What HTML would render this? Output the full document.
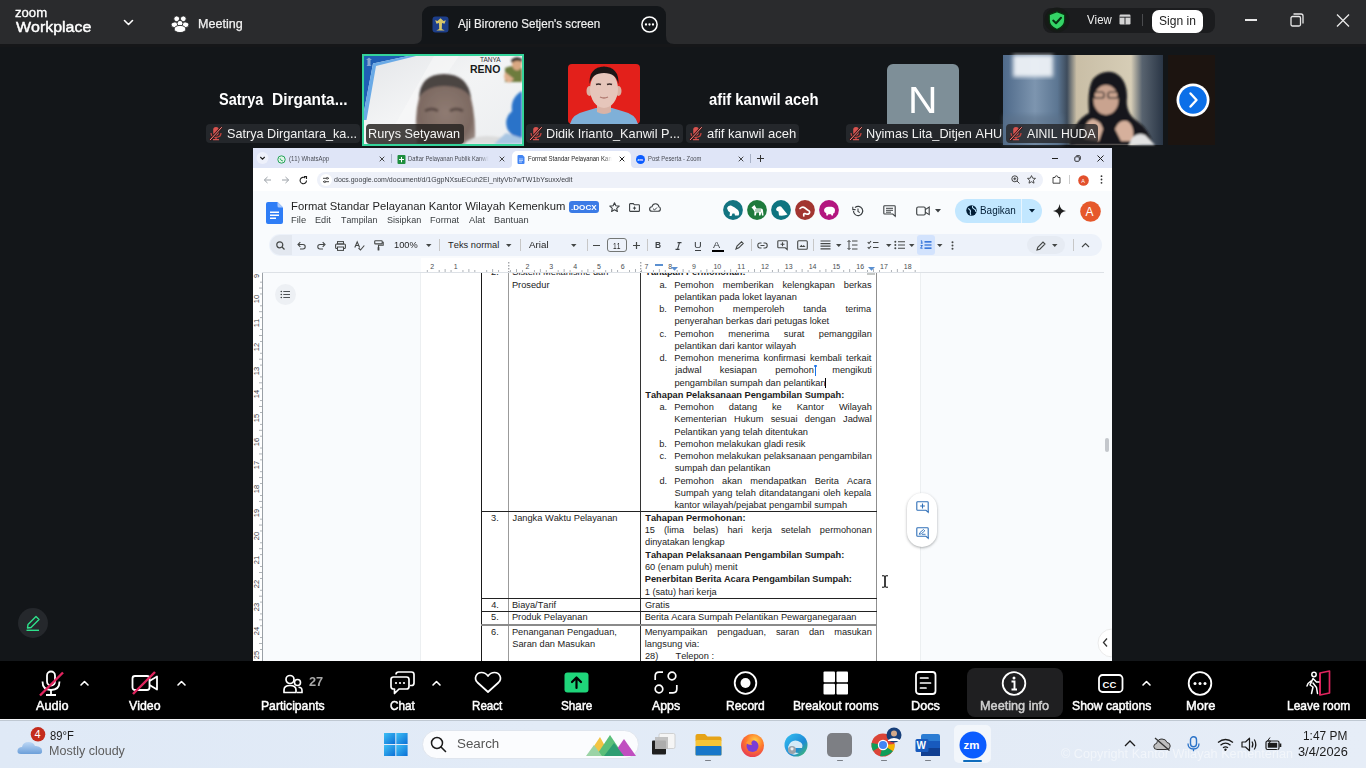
<!DOCTYPE html><html><head><meta charset="utf-8"><style>
*{margin:0;padding:0;box-sizing:border-box}
html,body{width:1366px;height:768px;overflow:hidden;background:#131619;font-family:"Liberation Sans",sans-serif}
.a{position:absolute}
.t{position:absolute;white-space:nowrap;transform-origin:0 0;font-kerning:none}
svg.a{overflow:visible}
</style></head><body><div class="a" style="left:0px;top:0px;width:1366px;height:44px;background:#2a2b2d"></div>
<div class="a" style="left:0px;top:44px;width:1366px;height:3px;background:#161719"></div>
<div class="t" style="left:15.47px;top:5.57px;font-size:13.5px;line-height:13.5px;color:#fff;transform:scaleX(0.9723);-webkit-text-stroke:0.35px #fff">zoom</div>
<div class="t" style="left:16.43px;top:19.28px;font-size:15.5px;line-height:15.5px;color:#fff;transform:scaleX(1.0282);-webkit-text-stroke:0.45px #fff">Workplace</div>
<svg class="a" style="left:123px;top:19px;" width="11" height="7" viewBox="0 0 11 7"><path d="M1.5 1.5L5.5 5.5L9.5 1.5" stroke="#fff" stroke-width="1.6" fill="none" stroke-linecap="round" stroke-linejoin="round"/></svg>
<svg class="a" style="left:171px;top:15px;" width="18" height="18" viewBox="0 0 18 18"><g fill="#fff" stroke="#2a2b2d" stroke-width="0.9"><circle cx="5.7" cy="3.8" r="2.9"/><circle cx="12.3" cy="3.8" r="2.9"/><ellipse cx="3.9" cy="9.8" rx="3.8" ry="2.9"/><ellipse cx="14.1" cy="9.8" rx="3.8" ry="2.9"/><circle cx="9" cy="8.3" r="2.9"/><ellipse cx="9" cy="14" rx="5.9" ry="3.6"/></g></svg>
<div class="t" style="left:197.57px;top:17.92px;font-size:12.5px;line-height:12.5px;color:#f2f2f2;transform:scaleX(1.0038);-webkit-text-stroke:0.25px #f2f2f2">Meeting</div>
<div class="a" style="left:422px;top:6px;width:244px;height:38px;background:#131619;border-radius:9px 9px 0 0"></div>
<svg class="a" style="left:414px;top:36px;" width="8" height="8" viewBox="0 0 8 8"><path d="M0 8 Q8 8 8 0 L8 8Z" fill="#131619"/></svg>
<svg class="a" style="left:666px;top:36px;" width="8" height="8" viewBox="0 0 8 8"><path d="M8 8 Q0 8 0 0 L0 8Z" fill="#131619"/></svg>
<svg class="a" style="left:432px;top:16px;" width="17" height="17" viewBox="0 0 17 17"><rect x="0.5" y="0.5" width="16" height="16" rx="3" fill="#1d3e8a"/><path d="M8.5 2.2 L11.5 5 L13.8 4.2 L12.5 7.8 L10 7 L9.8 13 L12.8 14.6 L4.2 14.6 L7.2 13 L7 7 L4.5 7.8 L3.2 4.2 L5.5 5Z" fill="#d8c66a"/></svg>
<div class="t" style="left:458.18px;top:16.70px;font-size:13px;line-height:13px;color:#f0f0f0;transform:scaleX(0.8926);-webkit-text-stroke:0.2px #f0f0f0">Aji Biroreno Setjen's screen</div>
<svg class="a" style="left:641px;top:15.5px;" width="17" height="17" viewBox="0 0 17 17"><circle cx="8.5" cy="8.5" r="7.6" stroke="#fff" stroke-width="1.5" fill="none"/><circle cx="5" cy="8.5" r="1.15" fill="#fff"/><circle cx="8.5" cy="8.5" r="1.15" fill="#fff"/><circle cx="12" cy="8.5" r="1.15" fill="#fff"/></svg>
<div class="a" style="left:1043px;top:8px;width:172px;height:25px;background:#1b1c1e;border-radius:8px"></div>
<svg class="a" style="left:1044px;top:7px;" width="26" height="26" viewBox="0 0 26 26"><circle cx="13" cy="13" r="12.5" fill="#161a17"/><path d="M13 4.6 L20.8 7.6 L20.8 13 Q20.8 19.5 13 22.6 Q5.2 19.5 5.2 13 L5.2 7.6Z" fill="#34d466" stroke="#06330f" stroke-width="1.3"/><path d="M9.2 13.6 L12 16.2 L17 10.8" stroke="#073012" stroke-width="2" fill="none" stroke-linecap="round" stroke-linejoin="round"/></svg>
<div class="t" style="left:1086.95px;top:13.00px;font-size:13px;line-height:13px;color:#f0f0f0;transform:scaleX(0.8774);">View</div>
<svg class="a" style="left:1119px;top:14px;" width="12" height="11" viewBox="0 0 12 11"><rect x="0.5" y="0.5" width="11" height="10" rx="1.2" fill="#d4d4d4"/><path d="M0.5 3.2 H11.5 M6 3.2 V10.5" stroke="#1b1c1e" stroke-width="0.9"/></svg>
<div class="a" style="left:1142px;top:14px;width:1px;height:12px;background:#4a4b4e"></div>
<div class="a" style="left:1152px;top:10px;width:51px;height:23px;background:#fff;border-radius:7px"></div>
<div class="t" style="left:1158.75px;top:13.60px;font-size:13px;line-height:13px;color:#222;transform:scaleX(0.9265);">Sign in</div>
<div class="a" style="left:1245px;top:19px;width:12px;height:2px;background:#e8e8e8"></div>
<svg class="a" style="left:1290px;top:13px;" width="14" height="14" viewBox="0 0 14 14"><rect x="1" y="3.5" width="9.5" height="9.5" rx="1.5" stroke="#e8e8e8" stroke-width="1.3" fill="none"/><path d="M3.5 1 H11 Q13 1 13 3 V10.5" stroke="#e8e8e8" stroke-width="1.3" fill="none"/></svg>
<svg class="a" style="left:1336px;top:14px;" width="14" height="13" viewBox="0 0 14 13"><path d="M1 0.5 L13 12.5 M13 0.5 L1 12.5" stroke="#e8e8e8" stroke-width="1.3"/></svg>
<div class="a" style="left:0px;top:47px;width:1366px;height:101px;background:#131619"></div>
<div class="t" style="left:218.58px;top:92.46px;font-size:16px;line-height:16px;color:#fff;font-weight:bold;transform:scaleX(0.9060);">Satrya</div>
<div class="t" style="left:271.57px;top:92.46px;font-size:16px;line-height:16px;color:#fff;font-weight:bold;transform:scaleX(0.9650);">Dirganta...</div>
<div class="a" style="left:206px;top:124px;width:154px;height:19px;background:#24272b;border-radius:4px"></div>
<svg class="a" style="left:207.5px;top:126px;" width="15" height="15" viewBox="0 0 15 15"><rect x="5.2" y="1" width="5.6" height="8.5" rx="2.8" fill="#d9534f"/><path d="M3 7 Q3 11.3 8 11.3 Q13 11.3 13 7" stroke="#c9443f" stroke-width="1.2" fill="none"/><path d="M8 11.3 V13.3 M5 13.6 H11" stroke="#d9534f" stroke-width="1.2"/><path d="M2 14 L13.8 1.2" stroke="#3a1516" stroke-width="2.6"/><path d="M2 14 L13.8 1.2" stroke="#f08a86" stroke-width="1"/></svg>
<div class="t" style="left:227.13px;top:127.00px;font-size:13px;line-height:13px;color:#f2f2f2;transform:scaleX(0.9720);">Satrya Dirgantara_ka...</div>
<svg class="a" style="left:364px;top:56px;" width="158" height="88" viewBox="0 0 158 88"><defs><linearGradient id="rg" x1="0" y1="0" x2="1" y2="1"><stop offset="0" stop-color="#e4e6e9"/><stop offset="0.45" stop-color="#f3f4f5"/><stop offset="1" stop-color="#eceef0"/></linearGradient><radialGradient id="face" cx="0.5" cy="0.55" r="0.6"><stop offset="0" stop-color="#8f7b72"/><stop offset="0.75" stop-color="#7d6a62"/><stop offset="1" stop-color="#9a8a84"/></radialGradient><filter id="b1"><feGaussianBlur stdDeviation="1.2"/></filter></defs><rect width="158" height="88" fill="url(#rg)"/><path d="M20 88 L70 0 H95 L35 88Z" fill="#fafafa" opacity="0.5"/><path d="M0 0 H44 L9 7.5 L0 55Z" fill="#1f5fb5"/><path d="M44 0 H52 L12 10 L2.5 64 H0 V55 L9 7.5Z" fill="#6aaae6"/><path d="M5 1.5 L8 4 L6.5 4 V9 L7.5 10 H2.5 L3.5 9 V4 L2 4Z" fill="#9fb9d6" opacity="0.8"/><g filter="url(#b1)"><path d="M53 88 Q50 60 55 42 Q58 20 80 19 Q104 20 107 42 Q112 62 111 88Z" fill="url(#face)"/><path d="M55 42 Q56 18 80 18 Q104 18 107 42 Q100 30 80 30 Q62 30 55 42Z" fill="#4c4442"/><path d="M61 55 Q68 51 74 55 M86 55 Q92 51 99 55" stroke="#4a3c37" stroke-width="3" fill="none" opacity="0.7"/><path d="M100 88 Q112 76 140 82 L150 88Z" fill="#dcdcdc"/></g><text x="106" y="16.5" font-family="Liberation Sans" font-weight="bold" font-size="10.5" fill="#1a1a1a">RENO</text><text x="116" y="5.5" font-family="Liberation Sans" font-size="6.5" fill="#333">TANYA</text><g filter="url(#b1)"><path d="M141 12 Q150 8 158 12 V26 H141Z" fill="#6d7b3c"/><ellipse cx="153" cy="8" rx="5" ry="6.5" fill="#d9a882"/><path d="M147 4 Q152 -1 158 3 V6 Q152 3 148 7Z" fill="#2d2a28"/><path d="M141 16 Q138 24 145 27 L150 23Z" fill="#e0b08e"/></g><g filter="url(#b1)"><path d="M158 35 Q146 42 148 55 Q140 62 143 72 Q146 80 158 84Z" fill="#2a73c9"/><path d="M130 88 L142 77 L158 82 V88Z" fill="#a9c6e3"/></g></svg>
<div class="a" style="left:362px;top:54px;width:162px;height:92px;border:2px solid #34d39a"></div>
<div class="a" style="left:366px;top:124px;width:98px;height:19.5px;background:rgba(40,36,34,0.85);border-radius:4px"></div>
<div class="t" style="left:367.66px;top:127.00px;font-size:13px;line-height:13px;color:#f5f5f5;transform:scaleX(0.9726);">Rurys Setyawan</div>
<svg class="a" style="left:567.5px;top:64px;" width="72" height="60" viewBox="0 0 72 60"><defs><filter id="b3"><feGaussianBlur stdDeviation="0.6"/></filter></defs><rect width="72" height="60" rx="4" fill="#e3201b"/><g filter="url(#b3)"><path d="M2 60 Q4 50 18 47 L28 44 H44 L54 47 Q68 50 70 60Z" fill="#7fb0d8"/><path d="M29 38 H43 V48 Q36 52 29 48Z" fill="#d9b3a6"/><ellipse cx="21.5" cy="27" rx="3" ry="5" fill="#dcb2a4"/><ellipse cx="50.5" cy="27" rx="3" ry="5" fill="#dcb2a4"/><ellipse cx="36" cy="25" rx="14" ry="19" fill="#e6c6bb"/><path d="M21.5 20 Q21 3 36 2.5 Q51 3 50.5 20 Q48 9 36 9 Q24 9 21.5 20Z" fill="#1d1818"/><path d="M28 20.5 Q30.5 19.5 33 20.5 M39 20.5 Q41.5 19.5 44 20.5" stroke="#3a2a28" stroke-width="1.4" fill="none"/><path d="M32 33 Q36 35 40 33" stroke="#b07a70" stroke-width="1.3" fill="none"/></g></svg>
<div class="a" style="left:526px;top:124px;width:157px;height:18.599999999999994px;background:#24272b;border-radius:4px"></div>
<svg class="a" style="left:528px;top:126px;" width="15" height="15" viewBox="0 0 15 15"><rect x="5.2" y="1" width="5.6" height="8.5" rx="2.8" fill="#d9534f"/><path d="M3 7 Q3 11.3 8 11.3 Q13 11.3 13 7" stroke="#c9443f" stroke-width="1.2" fill="none"/><path d="M8 11.3 V13.3 M5 13.6 H11" stroke="#d9534f" stroke-width="1.2"/><path d="M2 14 L13.8 1.2" stroke="#3a1516" stroke-width="2.6"/><path d="M2 14 L13.8 1.2" stroke="#f08a86" stroke-width="1"/></svg>
<div class="t" style="left:546.36px;top:127.00px;font-size:13px;line-height:13px;color:#f2f2f2;transform:scaleX(0.9768);">Didik Irianto_Kanwil P...</div>
<div class="t" style="left:708.77px;top:91.96px;font-size:16px;line-height:16px;color:#fff;font-weight:bold;transform:scaleX(0.9263);">afif kanwil aceh</div>
<div class="a" style="left:686px;top:124px;width:112.70000000000005px;height:18.599999999999994px;background:#24272b;border-radius:4px"></div>
<svg class="a" style="left:688px;top:126px;" width="15" height="15" viewBox="0 0 15 15"><rect x="5.2" y="1" width="5.6" height="8.5" rx="2.8" fill="#d9534f"/><path d="M3 7 Q3 11.3 8 11.3 Q13 11.3 13 7" stroke="#c9443f" stroke-width="1.2" fill="none"/><path d="M8 11.3 V13.3 M5 13.6 H11" stroke="#d9534f" stroke-width="1.2"/><path d="M2 14 L13.8 1.2" stroke="#3a1516" stroke-width="2.6"/><path d="M2 14 L13.8 1.2" stroke="#f08a86" stroke-width="1"/></svg>
<div class="t" style="left:706.65px;top:127.00px;font-size:13px;line-height:13px;color:#f2f2f2;transform:scaleX(1.0036);">afif kanwil aceh</div>
<div class="a" style="left:887px;top:64px;width:72.29999999999995px;height:60px;background:#7e8f98;border-radius:6px 6px 0 0"></div>
<div class="t" style="left:908.05px;top:83.03px;font-size:36px;line-height:36px;color:#fff;transform:scaleX(1.1338);">N</div>
<div class="a" style="left:846px;top:124px;width:157px;height:18.599999999999994px;background:#24272b;border-radius:4px 0 0 4px"></div>
<svg class="a" style="left:848px;top:126px;" width="15" height="15" viewBox="0 0 15 15"><rect x="5.2" y="1" width="5.6" height="8.5" rx="2.8" fill="#d9534f"/><path d="M3 7 Q3 11.3 8 11.3 Q13 11.3 13 7" stroke="#c9443f" stroke-width="1.2" fill="none"/><path d="M8 11.3 V13.3 M5 13.6 H11" stroke="#d9534f" stroke-width="1.2"/><path d="M2 14 L13.8 1.2" stroke="#3a1516" stroke-width="2.6"/><path d="M2 14 L13.8 1.2" stroke="#f08a86" stroke-width="1"/></svg>
<div class="t" style="left:866.06px;top:127.00px;font-size:13px;line-height:13px;color:#f2f2f2;transform:scaleX(0.9770);">Nyimas Lita_Ditjen AHU</div>
<svg class="a" style="left:1003px;top:55px;" width="160" height="90" viewBox="0 0 160 90"><defs><linearGradient id="ag" x1="0" y1="0" x2="1" y2="0"><stop offset="0" stop-color="#4f6a8a"/><stop offset="0.2" stop-color="#7d95af"/><stop offset="0.34" stop-color="#5c7692"/><stop offset="0.4" stop-color="#3e4c5c"/><stop offset="0.46" stop-color="#c9bea6"/><stop offset="0.8" stop-color="#d6cdb6"/><stop offset="0.87" stop-color="#58636f"/><stop offset="1" stop-color="#2a3646"/></linearGradient><filter id="bl"><feGaussianBlur stdDeviation="2"/></filter><filter id="b2"><feGaussianBlur stdDeviation="0.8"/></filter></defs><rect width="160" height="90" fill="url(#ag)"/><rect x="10" y="0" width="40" height="22" fill="#eef2f7" filter="url(#bl)" opacity="0.95"/><rect x="0" y="60" width="60" height="30" fill="#5a7088" opacity="0.5" filter="url(#bl)"/><g filter="url(#b2)"><path d="M66 90 Q70 66 86 58 Q84 34 90 24 Q100 14 112 18 Q124 24 124 42 Q122 58 134 66 Q146 74 150 90Z" fill="#17191c"/><ellipse cx="103" cy="45" rx="12.5" ry="15" fill="#c9a38f"/><path d="M90 30 Q103 20 116 30 Q114 26 103 24 Q92 26 90 30Z" fill="#17191c"/><rect x="91" y="37" width="10" height="6" rx="2" stroke="#1a1a1a" stroke-width="1.2" fill="none"/><rect x="105" y="37" width="10" height="6" rx="2" stroke="#1a1a1a" stroke-width="1.2" fill="none"/><path d="M82 84 Q80 66 90 64 Q98 66 100 74 L96 86Z" fill="#d6b09c"/><path d="M112 74 Q116 64 124 66 Q132 70 130 86 L118 86Z" fill="#d6b09c"/><path d="M126 90 Q130 76 142 80 L152 90Z" fill="#e2e2e2"/></g></svg>
<div class="a" style="left:1006px;top:124px;width:92px;height:18.599999999999994px;background:rgba(38,38,40,0.8);border-radius:4px"></div>
<svg class="a" style="left:1008px;top:126px;" width="15" height="15" viewBox="0 0 15 15"><rect x="5.2" y="1" width="5.6" height="8.5" rx="2.8" fill="#d9534f"/><path d="M3 7 Q3 11.3 8 11.3 Q13 11.3 13 7" stroke="#c9443f" stroke-width="1.2" fill="none"/><path d="M8 11.3 V13.3 M5 13.6 H11" stroke="#d9534f" stroke-width="1.2"/><path d="M2 14 L13.8 1.2" stroke="#3a1516" stroke-width="2.6"/><path d="M2 14 L13.8 1.2" stroke="#f08a86" stroke-width="1"/></svg>
<div class="t" style="left:1026.98px;top:127.00px;font-size:13px;line-height:13px;color:#f2f2f2;transform:scaleX(0.9395);">AINIL HUDA</div>
<div class="a" style="left:1168px;top:55px;width:47px;height:90px;background:#1c1410"></div>
<svg class="a" style="left:1176px;top:83px;" width="34" height="34" viewBox="0 0 34 34"><circle cx="17" cy="17" r="16.5" fill="#fff"/><circle cx="17" cy="17" r="13.8" fill="#0b6fe8"/><path d="M14.5 10.5 L20.5 17 L14.5 23.5" stroke="#fff" stroke-width="2.4" fill="none" stroke-linecap="round" stroke-linejoin="round"/></svg>
<div class="a" style="left:253px;top:148px;width:859px;height:513px;background:#f9fbfd;overflow:hidden"></div>
<div class="a" style="left:253px;top:148px;width:859px;height:20px;background:#dfe5f7"></div>
<svg class="a" style="left:256px;top:152px;" width="13" height="12" viewBox="0 0 13 12"><circle cx="6.5" cy="6" r="6" fill="#eef1fb"/><path d="M4.3 5 L6.5 7.2 L8.7 5" stroke="#1f1f1f" stroke-width="1.1" fill="none"/></svg>
<svg class="a" style="left:276.5px;top:154.5px;" width="9" height="9" viewBox="0 0 9 9"><circle cx="4.5" cy="4.5" r="3.7" stroke="#25a35a" stroke-width="1" fill="#dff5e6"/><path d="M3 3.3 Q3.5 5.8 6 6" stroke="#25a35a" stroke-width="0.9" fill="none"/></svg>
<div class="t" style="left:288.83px;top:155.11px;font-size:7.2px;line-height:7.2px;color:#4a4d55;transform:scaleX(0.8377);">(11) WhatsApp</div>
<svg class="a" style="left:379px;top:155.5px;" width="6" height="6" viewBox="0 0 6 6"><path d="M0.7 0.7 L5.3 5.3 M5.3 0.7 L0.7 5.3" stroke="#333" stroke-width="0.9"/></svg>
<div class="a" style="left:391px;top:154px;width:1px;height:9px;background:#aab3c8"></div>
<svg class="a" style="left:397px;top:154.5px;" width="9" height="9" viewBox="0 0 9 9"><rect x="0.5" y="0" width="8" height="9" rx="1" fill="#1e8e3e"/><path d="M2 4.5 H7 M4.5 2 V7.3" stroke="#fff" stroke-width="1"/></svg>
<div class="t" style="left:408.22px;top:155.11px;font-size:7.2px;line-height:7.2px;color:#4a4d55;transform:scaleX(0.8080);-webkit-mask-image:linear-gradient(90deg,#000 88%,transparent)">Daftar Pelayanan Publik Kanwil</div>
<svg class="a" style="left:498.5px;top:155.5px;" width="6" height="6" viewBox="0 0 6 6"><path d="M0.7 0.7 L5.3 5.3 M5.3 0.7 L0.7 5.3" stroke="#333" stroke-width="0.9"/></svg>
<div class="a" style="left:512px;top:151px;width:119px;height:17px;background:#fff;border-radius:5px 5px 0 0"></div>
<svg class="a" style="left:508px;top:163px;" width="4" height="5" viewBox="0 0 4 5"><path d="M0 5 Q4 5 4 1 V5Z" fill="#fff"/></svg>
<svg class="a" style="left:631px;top:163px;" width="4" height="5" viewBox="0 0 4 5"><path d="M4 5 Q0 5 0 1 V5Z" fill="#fff"/></svg>
<svg class="a" style="left:517px;top:154.5px;" width="8" height="9" viewBox="0 0 8 9"><path d="M0.5 1 Q0.5 0 1.5 0 H5.5 L7.5 2 V8 Q7.5 9 6.5 9 H1.5 Q0.5 9 0.5 8Z" fill="#4285f4"/><path d="M2 4 H6 M2 5.5 H6 M2 7 H5" stroke="#fff" stroke-width="0.6"/></svg>
<div class="t" style="left:528.21px;top:155.11px;font-size:7.2px;line-height:7.2px;color:#1f1f1f;transform:scaleX(0.8317);-webkit-mask-image:linear-gradient(90deg,#000 90%,transparent)">Format Standar Pelayanan Kan</div>
<svg class="a" style="left:618.5px;top:155.5px;" width="6" height="6" viewBox="0 0 6 6"><path d="M0.7 0.7 L5.3 5.3 M5.3 0.7 L0.7 5.3" stroke="#1f1f1f" stroke-width="1"/></svg>
<svg class="a" style="left:636px;top:154.5px;" width="9" height="9" viewBox="0 0 9 9"><circle cx="4.5" cy="4.5" r="4.5" fill="#0b5cff"/><text x="1.2" y="6.2" font-family="Liberation Sans" font-weight="bold" font-size="4" fill="#fff">zm</text></svg>
<div class="t" style="left:648.42px;top:155.11px;font-size:7.2px;line-height:7.2px;color:#4a4d55;transform:scaleX(0.8113);">Post Peserta - Zoom</div>
<svg class="a" style="left:738px;top:155.5px;" width="6" height="6" viewBox="0 0 6 6"><path d="M0.7 0.7 L5.3 5.3 M5.3 0.7 L0.7 5.3" stroke="#333" stroke-width="0.9"/></svg>
<div class="a" style="left:750px;top:154px;width:1px;height:9px;background:#aab3c8"></div>
<svg class="a" style="left:756.5px;top:155px;" width="7" height="7" viewBox="0 0 7 7"><path d="M3.5 0 V7 M0 3.5 H7" stroke="#333" stroke-width="1"/></svg>
<div class="a" style="left:1052px;top:157.5px;width:6px;height:1.0px;background:#1f1f1f"></div>
<svg class="a" style="left:1074px;top:155px;" width="7" height="7" viewBox="0 0 7 7"><rect x="0.8" y="1.8" width="4.5" height="4.5" rx="1" stroke="#1f1f1f" stroke-width="0.9" fill="none"/><path d="M2.3 0.7 H5.3 Q6.3 0.7 6.3 1.7 V4.7" stroke="#1f1f1f" stroke-width="0.9" fill="none"/></svg>
<svg class="a" style="left:1097px;top:155px;" width="7" height="7" viewBox="0 0 7 7"><path d="M0.5 0.5 L6.5 6.5 M6.5 0.5 L0.5 6.5" stroke="#1f1f1f" stroke-width="1"/></svg>
<div class="a" style="left:253px;top:168px;width:859px;height:23px;background:#fff"></div>
<svg class="a" style="left:263px;top:175.5px;" width="9" height="8" viewBox="0 0 9 8"><path d="M8 4 H1.5 M4.5 1 L1.3 4 L4.5 7" stroke="#9aa0a6" stroke-width="1" fill="none"/></svg>
<svg class="a" style="left:281px;top:175.5px;" width="9" height="8" viewBox="0 0 9 8"><path d="M1 4 H7.5 M4.5 1 L7.7 4 L4.5 7" stroke="#9aa0a6" stroke-width="1" fill="none"/></svg>
<svg class="a" style="left:299px;top:175.5px;" width="9" height="9" viewBox="0 0 9 9"><path d="M7.5 4.5 A3.2 3.2 0 1 1 6.3 2" stroke="#1f1f1f" stroke-width="1.1" fill="none"/><path d="M5 0.5 H7.5 V3" stroke="#1f1f1f" stroke-width="1.1" fill="none"/></svg>
<div class="a" style="left:317px;top:172px;width:726px;height:16px;background:#eef1f9;border-radius:8px"></div>
<svg class="a" style="left:320px;top:174px;" width="12" height="12" viewBox="0 0 12 12"><circle cx="6" cy="6" r="6" fill="#fff"/><path d="M3 4.3 H6.5 M8 4.3 H9 M3 7.7 H4 M5.5 7.7 H9" stroke="#333" stroke-width="0.9"/><circle cx="7.2" cy="4.3" r="0.9" stroke="#333" stroke-width="0.8" fill="none"/><circle cx="4.8" cy="7.7" r="0.9" stroke="#333" stroke-width="0.8" fill="none"/></svg>
<div class="t" style="left:333.91px;top:176.07px;font-size:7.6px;line-height:7.6px;color:#3c3f45;transform:scaleX(0.9216);">docs.google.com/document/d/1GgpNXsuECuh2El_nityVb7wTW1bYsuxx/edit</div>
<svg class="a" style="left:1011px;top:175px;" width="9" height="9" viewBox="0 0 9 9"><circle cx="3.8" cy="3.8" r="3" stroke="#333" stroke-width="0.9" fill="none"/><path d="M6 6 L8.5 8.5 M2.3 3.8 H5.3 M3.8 2.3 V5.3" stroke="#333" stroke-width="0.9"/></svg>
<svg class="a" style="left:1027px;top:175px;" width="9" height="9" viewBox="0 0 9 9"><path d="M4.5 0.6 L5.7 3.2 L8.5 3.4 L6.4 5.3 L7 8.2 L4.5 6.7 L2 8.2 L2.6 5.3 L0.5 3.4 L3.3 3.2Z" stroke="#333" stroke-width="0.85" fill="none" stroke-linejoin="round"/></svg>
<svg class="a" style="left:1052px;top:175px;" width="9" height="9" viewBox="0 0 9 9"><path d="M1 2.5 H3 Q3 0.8 4.5 0.8 Q6 0.8 6 2.5 H8 V8.2 H1Z" stroke="#333" stroke-width="0.9" fill="none"/></svg>
<div class="a" style="left:1069px;top:175px;width:1px;height:9px;background:#ccc"></div>
<svg class="a" style="left:1077.5px;top:174.5px;" width="11" height="11" viewBox="0 0 11 11"><circle cx="5.5" cy="5.5" r="5.3" fill="#e2502c"/><text x="3.3" y="7.7" font-family="Liberation Sans" font-size="5.5" fill="#fff">A</text></svg>
<svg class="a" style="left:1100px;top:175px;" width="3" height="9" viewBox="0 0 3 9"><circle cx="1.5" cy="1.2" r="0.9" fill="#333"/><circle cx="1.5" cy="4.5" r="0.9" fill="#333"/><circle cx="1.5" cy="7.8" r="0.9" fill="#333"/></svg>
<div class="a" style="left:253px;top:191px;width:859px;height:41px;background:#f9fbfd"></div>
<svg class="a" style="left:266px;top:201.5px;" width="17" height="22" viewBox="0 0 17 22"><path d="M0 2 Q0 0 2 0 H11.5 L17 5.5 V20 Q17 22 15 22 H2 Q0 22 0 20Z" fill="#2f7df6"/><path d="M11.5 0 V4 Q11.5 5.5 13 5.5 H17Z" fill="#a9c8fb"/><path d="M4 10.2 H13 M4 13.2 H13 M4 16.2 H10" stroke="#fff" stroke-width="1.5"/></svg>
<div class="t" style="left:290.88px;top:200.51px;font-size:11.8px;line-height:11.8px;color:#1f1f1f;transform:scaleX(0.9554);">Format Standar Pelayanan Kantor Wilayah Kemenkum</div>
<div class="a" style="left:569px;top:200.5px;width:30px;height:12.199999999999989px;background:#3b7be6;border-radius:3px"></div>
<div class="t" style="left:570.95px;top:203.67px;font-size:7px;line-height:7px;color:#fff;font-weight:bold;transform:scaleX(1.1557);">.DOCX</div>
<svg class="a" style="left:608.5px;top:202px;" width="11" height="10" viewBox="0 0 11 10"><path d="M5.5 0.8 L6.9 3.8 L10.2 4.1 L7.7 6.3 L8.4 9.5 L5.5 7.8 L2.6 9.5 L3.3 6.3 L0.8 4.1 L4.1 3.8Z" stroke="#3c4043" stroke-width="1.1" fill="none" stroke-linejoin="round"/></svg>
<svg class="a" style="left:628.5px;top:202.5px;" width="11" height="9" viewBox="0 0 11 9"><path d="M0.6 1.3 Q0.6 0.6 1.3 0.6 H4.3 L5.3 1.8 H9.7 Q10.4 1.8 10.4 2.5 V7.7 Q10.4 8.4 9.7 8.4 H1.3 Q0.6 8.4 0.6 7.7Z" stroke="#3c4043" stroke-width="1.1" fill="none"/><path d="M5.5 3.5 V6.7 M3.9 5.1 H7.1" stroke="#3c4043" stroke-width="1"/></svg>
<svg class="a" style="left:648.5px;top:202.5px;" width="12" height="9" viewBox="0 0 12 9"><path d="M3 8.3 Q0.6 8.3 0.6 6 Q0.6 3.8 3 3.7 Q3.7 0.7 6.5 0.7 Q9.5 0.7 9.9 3.8 Q11.4 4.2 11.4 6 Q11.4 8.3 9 8.3Z" stroke="#3c4043" stroke-width="1.1" fill="none"/><path d="M4 5.6 L5.5 7 L8 4.5" stroke="#3c4043" stroke-width="1" fill="none"/></svg>
<div class="t" style="left:291.03px;top:216.18px;font-size:9px;line-height:9px;color:#3c4043;transform:scaleX(1.0401);">File</div>
<div class="t" style="left:314.95px;top:216.18px;font-size:9px;line-height:9px;color:#3c4043;transform:scaleX(1.0133);">Edit</div>
<div class="t" style="left:341.40px;top:216.18px;font-size:9px;line-height:9px;color:#3c4043;transform:scaleX(0.9827);">Tampilan</div>
<div class="t" style="left:386.99px;top:216.18px;font-size:9px;line-height:9px;color:#3c4043;transform:scaleX(1.0053);">Sisipkan</div>
<div class="t" style="left:429.95px;top:216.18px;font-size:9px;line-height:9px;color:#3c4043;transform:scaleX(1.0217);">Format</div>
<div class="t" style="left:469.18px;top:216.18px;font-size:9px;line-height:9px;color:#3c4043;transform:scaleX(1.0373);">Alat</div>
<div class="t" style="left:494.14px;top:216.18px;font-size:9px;line-height:9px;color:#3c4043;transform:scaleX(1.0339);">Bantuan</div>
<svg class="a" style="left:723.0px;top:200.1px;" width="20" height="20" viewBox="0 0 20 20"><circle cx="10" cy="10" r="9.9" fill="#137481"/><path d="M4 8 Q5 5 8 5.5 Q12 7 15 10 Q17 13 15.5 15.5 H12 L11.5 13.5 H9.5 L8.5 16 H6.5 L7 12.5 Q4.5 11 4 8Z" fill="#fff"/></svg>
<svg class="a" style="left:746.97px;top:200.1px;" width="20" height="20" viewBox="0 0 20 20"><circle cx="10" cy="10" r="9.9" fill="#1e7a3c"/><path d="M4.5 7.5 L7.5 5 L9.5 8.5 H14 Q16 8.5 16 10.5 L16.5 15.5 H15 L14.5 12 L13.5 15.5 H12 V12.5 H9.5 L8.8 15.5 H7.3 L7.5 11.5 L6 9Z" fill="#fff"/><path d="M9 9 V12 M11 9 V12 M13 9 V12" stroke="#1e7a3c" stroke-width="0.7"/></svg>
<svg class="a" style="left:770.94px;top:200.1px;" width="20" height="20" viewBox="0 0 20 20"><circle cx="10" cy="10" r="9.9" fill="#0e7480"/><path d="M5 9 Q6.5 5.5 10 6.5 L16.5 14.5 Q14 16 8 15.5 L7.5 11.5 Q5 11.2 5 9Z" fill="#fff"/></svg>
<svg class="a" style="left:794.91px;top:200.1px;" width="20" height="20" viewBox="0 0 20 20"><circle cx="10" cy="10" r="9.9" fill="#a23531"/><path d="M5 8.5 Q7.5 6 10 8 L12.5 10 Q15.5 11 14.3 13.3 Q12.5 15 10 13.6 Q8.3 13 8.8 15.8" stroke="#fff" stroke-width="1.7" fill="none" stroke-linecap="round"/></svg>
<svg class="a" style="left:818.88px;top:200.1px;" width="20" height="20" viewBox="0 0 20 20"><circle cx="10" cy="10" r="9.9" fill="#b3167f"/><path d="M5 10 Q5.5 7 9.5 6.8 H12.5 Q16 7.2 16 10.5 Q16 13 14.2 13.6 L14 15.5 H12.5 L12 14.2 H9.3 L8.8 15.5 H7.3 L7.2 13.3 Q5 12.8 5 10Z" fill="#fff"/></svg>
<svg class="a" style="left:852px;top:204.5px;" width="12" height="12" viewBox="0 0 12 12"><path d="M1.5 6 A4.6 4.6 0 1 0 3 2.6" stroke="#3c4043" stroke-width="1.2" fill="none"/><path d="M0.8 1.8 V4.6 H3.6" stroke="#3c4043" stroke-width="1.1" fill="none"/><path d="M6 3.6 V6.4 L7.8 7.6" stroke="#3c4043" stroke-width="1.1" fill="none"/></svg>
<svg class="a" style="left:882.5px;top:204.5px;" width="13" height="12" viewBox="0 0 13 12"><path d="M0.8 1.5 Q0.8 0.7 1.6 0.7 H11.4 Q12.2 0.7 12.2 1.5 V11.3 L9.8 9 H1.6 Q0.8 9 0.8 8.2Z" stroke="#3c4043" stroke-width="1.1" fill="none"/><path d="M3 3.3 H10 M3 5.3 H10 M3 7.2 H8" stroke="#3c4043" stroke-width="1"/></svg>
<svg class="a" style="left:915.5px;top:205px;" width="14" height="11" viewBox="0 0 14 11"><rect x="0.7" y="2" width="8.6" height="8" rx="1.5" stroke="#3c4043" stroke-width="1.15" fill="none"/><path d="M9.3 4.6 L13.2 2 V9.6 L9.3 7.2" stroke="#3c4043" stroke-width="1.1" fill="none"/></svg>
<svg class="a" style="left:935px;top:209px;" width="6" height="4" viewBox="0 0 6 4"><path d="M0 0 H6 L3 3.5Z" fill="#3c4043"/></svg>
<div class="a" style="left:954.5px;top:198.5px;width:87.0px;height:24.5px;background:#c2e7ff;border-radius:12px"></div>
<div class="a" style="left:1020.5px;top:198.5px;width:1.0px;height:24.5px;background:#f9fbfd;opacity:0.7"></div>
<svg class="a" style="left:965.5px;top:205px;" width="11" height="11" viewBox="0 0 11 11"><circle cx="5.5" cy="5.5" r="5.2" fill="#001d35"/><path d="M2 3.5 Q4 4 4.5 6 Q3.8 8 4.8 10 M6.5 1 Q6 3 7.8 3.8 Q9.8 4.5 10 7" stroke="#c2e7ff" stroke-width="1.1" fill="none"/></svg>
<div class="t" style="left:980.19px;top:204.91px;font-size:10.5px;line-height:10.5px;color:#001d35;transform:scaleX(0.9450);">Bagikan</div>
<svg class="a" style="left:1028.5px;top:209px;" width="6" height="4" viewBox="0 0 6 4"><path d="M0 0 H6 L3 3.5Z" fill="#001d35"/></svg>
<svg class="a" style="left:1053px;top:203.5px;" width="13" height="14" viewBox="0 0 13 14"><path d="M6.5 0 Q7.2 6.3 13 7 Q7.2 7.7 6.5 14 Q5.8 7.7 0 7 Q5.8 6.3 6.5 0Z" fill="#1f1f1f"/></svg>
<svg class="a" style="left:1079.5px;top:200.5px;" width="21" height="21" viewBox="0 0 21 21"><circle cx="10.5" cy="10.5" r="10.3" fill="#e6582b"/><text x="5.6" y="14.8" font-family="Liberation Sans" font-size="12" fill="#fff">A</text></svg>
<div class="a" style="left:269px;top:234px;width:833px;height:22px;background:#edf2fa;border-radius:11px"></div>
<div class="a" style="left:270px;top:235px;width:22px;height:20px;background:#e3e8f0;border-radius:10px 0 0 10px"></div>
<svg class="a" style="left:275.5px;top:241px;" width="9" height="9" viewBox="0 0 9 9"><circle cx="3.8" cy="3.8" r="3" stroke="#444746" stroke-width="1.2" fill="none"/><path d="M6 6 L8.5 8.5" stroke="#444746" stroke-width="1.3"/></svg>
<svg class="a" style="left:297px;top:241px;" width="9" height="9" viewBox="0 0 9 9"><path d="M2 3.5 H6 Q8.2 3.5 8.2 5.8 Q8.2 8 6 8 H3" stroke="#444746" stroke-width="1.1" fill="none"/><path d="M3.3 1.2 L1 3.5 L3.3 5.8" stroke="#444746" stroke-width="1.1" fill="none"/></svg>
<svg class="a" style="left:316.5px;top:241px;" width="9" height="9" viewBox="0 0 9 9"><path d="M7 3.5 H3 Q0.8 3.5 0.8 5.8 Q0.8 8 3 8 H6" stroke="#444746" stroke-width="1.1" fill="none"/><path d="M5.7 1.2 L8 3.5 L5.7 5.8" stroke="#444746" stroke-width="1.1" fill="none"/></svg>
<svg class="a" style="left:334.5px;top:240.5px;" width="11" height="10" viewBox="0 0 11 10"><rect x="2.5" y="0.6" width="6" height="2.4" stroke="#444746" stroke-width="1" fill="none"/><rect x="0.6" y="3" width="9.8" height="4.5" rx="1" stroke="#444746" stroke-width="1.1" fill="none"/><rect x="2.5" y="6" width="6" height="3.4" stroke="#444746" stroke-width="1" fill="#edf2fa"/></svg>
<svg class="a" style="left:354px;top:240.5px;" width="11" height="10" viewBox="0 0 11 10"><path d="M0.8 6.5 L3.2 0.8 L5.6 6.5 M1.7 4.5 H4.7" stroke="#444746" stroke-width="1.1" fill="none"/><path d="M4.5 7 L6.5 9 L10.3 4.5" stroke="#444746" stroke-width="1.1" fill="none"/></svg>
<svg class="a" style="left:374px;top:240px;" width="10" height="11" viewBox="0 0 10 11"><rect x="0.7" y="0.7" width="7.5" height="3.2" rx="0.7" stroke="#444746" stroke-width="1.1" fill="none"/><path d="M8.2 2.3 H9.2 V5.3 H4.5 V7" stroke="#444746" stroke-width="1.1" fill="none"/><rect x="3.6" y="7" width="1.8" height="3.5" rx="0.5" fill="#444746"/></svg>
<div class="t" style="left:393.50px;top:241.33px;font-size:9.3px;line-height:9.3px;color:#1f1f1f;transform:scaleX(0.9936);">100%</div>
<svg class="a" style="left:426px;top:244px;" width="6" height="4" viewBox="0 0 6 4"><path d="M0 0 H5.5 L2.75 3Z" fill="#444746"/></svg>
<svg class="a" style="left:505.5px;top:244px;" width="6" height="4" viewBox="0 0 6 4"><path d="M0 0 H5.5 L2.75 3Z" fill="#444746"/></svg>
<svg class="a" style="left:571px;top:244px;" width="6" height="4" viewBox="0 0 6 4"><path d="M0 0 H5.5 L2.75 3Z" fill="#444746"/></svg>
<svg class="a" style="left:836px;top:244px;" width="6" height="4" viewBox="0 0 6 4"><path d="M0 0 H5.5 L2.75 3Z" fill="#444746"/></svg>
<svg class="a" style="left:885.5px;top:244px;" width="6" height="4" viewBox="0 0 6 4"><path d="M0 0 H5.5 L2.75 3Z" fill="#444746"/></svg>
<svg class="a" style="left:909px;top:244px;" width="6" height="4" viewBox="0 0 6 4"><path d="M0 0 H5.5 L2.75 3Z" fill="#444746"/></svg>
<svg class="a" style="left:936.5px;top:244px;" width="6" height="4" viewBox="0 0 6 4"><path d="M0 0 H5.5 L2.75 3Z" fill="#444746"/></svg>
<div class="a" style="left:438.5px;top:239px;width:1.0px;height:12px;background:#c7c7c7"></div>
<div class="a" style="left:519.5px;top:239px;width:1.0px;height:12px;background:#c7c7c7"></div>
<div class="a" style="left:586.5px;top:239px;width:1.0px;height:12px;background:#c7c7c7"></div>
<div class="a" style="left:646.5px;top:239px;width:1.0px;height:12px;background:#c7c7c7"></div>
<div class="a" style="left:750.5px;top:239px;width:1.0px;height:12px;background:#c7c7c7"></div>
<div class="a" style="left:813px;top:239px;width:1px;height:12px;background:#c7c7c7"></div>
<div class="a" style="left:1073px;top:239px;width:1px;height:12px;background:#c7c7c7"></div>
<div class="t" style="left:448.09px;top:241.33px;font-size:9.3px;line-height:9.3px;color:#1f1f1f;">Teks normal</div>
<div class="t" style="left:529.48px;top:241.33px;font-size:9.3px;line-height:9.3px;color:#1f1f1f;transform:scaleX(1.0521);">Arial</div>
<div class="a" style="left:593px;top:245px;width:7px;height:1.1999999999999886px;background:#444746"></div>
<div class="a" style="left:606.5px;top:238.3px;width:20.100000000000023px;height:13.899999999999977px;border:1px solid #747775;border-radius:3px"></div>
<div class="t" style="left:612.89px;top:241.60px;font-size:8.5px;line-height:8.5px;color:#1f1f1f;transform:scaleX(0.7865);">11</div>
<svg class="a" style="left:633px;top:242px;" width="7" height="7" viewBox="0 0 7 7"><path d="M3.5 0 V7 M0 3.5 H7" stroke="#444746" stroke-width="1.2"/></svg>
<div class="t" style="left:655.34px;top:241.18px;font-size:9px;line-height:9px;color:#3c4043;font-weight:bold;transform:scaleX(0.9292);">B</div>
<svg class="a" style="left:674.5px;top:241.5px;" width="7" height="8" viewBox="0 0 7 8"><path d="M2.5 0.6 H6.5 M0.5 7.4 H4.5 M4.5 0.6 L2.5 7.4" stroke="#3c4043" stroke-width="1.1" fill="none"/></svg>
<div class="t" style="left:693.87px;top:240.80px;font-size:8.5px;line-height:8.5px;color:#3c4043;transform:scaleX(1.2637);">U</div>
<div class="a" style="left:694.7px;top:249.5px;width:6.099999999999909px;height:1.0px;background:#3c4043"></div>
<div class="t" style="left:713.18px;top:240.55px;font-size:8.8px;line-height:8.8px;color:#3c4043;transform:scaleX(1.2168);">A</div>
<div class="a" style="left:711.5px;top:249.5px;width:12.5px;height:2.0px;background:#000"></div>
<svg class="a" style="left:735px;top:240.5px;" width="9" height="9" viewBox="0 0 9 9"><path d="M1 8 L2 5 L6.5 0.8 L8.2 2.5 L3.8 6.8Z" stroke="#444746" stroke-width="1.1" fill="none"/></svg>
<svg class="a" style="left:757px;top:242px;" width="11" height="7" viewBox="0 0 11 7"><path d="M4.5 1 H3 Q0.8 1 0.8 3.5 Q0.8 6 3 6 H4.5 M6.5 1 H8 Q10.2 1 10.2 3.5 Q10.2 6 8 6 H6.5 M3.5 3.5 H7.5" stroke="#444746" stroke-width="1.1" fill="none"/></svg>
<svg class="a" style="left:776.5px;top:240px;" width="11" height="10" viewBox="0 0 11 10"><path d="M0.8 1.5 Q0.8 0.7 1.6 0.7 H9.4 Q10.2 0.7 10.2 1.5 V9.5 L8.2 7.8 H1.6 Q0.8 7.8 0.8 7Z" stroke="#444746" stroke-width="1.1" fill="none"/><path d="M5.5 2.3 V6.2 M3.5 4.25 H7.5" stroke="#444746" stroke-width="1.1"/></svg>
<svg class="a" style="left:796.5px;top:240px;" width="11" height="10" viewBox="0 0 11 10"><rect x="0.7" y="0.7" width="9.6" height="8.6" rx="1" stroke="#444746" stroke-width="1.1" fill="none"/><path d="M2.5 7 L4.3 4.8 L5.7 6.2 L6.7 5 L8.5 7Z" fill="#444746"/></svg>
<svg class="a" style="left:819.5px;top:240px;" width="11" height="10" viewBox="0 0 11 10"><path d="M0.5 1 H10.5 M0.5 3.6 H10.5 M0.5 6.2 H10.5 M0.5 8.8 H10.5" stroke="#444746" stroke-width="1.2"/></svg>
<svg class="a" style="left:846.5px;top:240px;" width="11" height="10" viewBox="0 0 11 10"><path d="M5 1 H10.5 M5 5 H10.5 M5 9 H10.5" stroke="#444746" stroke-width="1.1"/><path d="M2 0.5 V9.5 M0.5 2 L2 0.5 L3.5 2 M0.5 8 L2 9.5 L3.5 8" stroke="#444746" stroke-width="1" fill="none"/></svg>
<svg class="a" style="left:867px;top:240px;" width="12" height="10" viewBox="0 0 12 10"><path d="M0.7 2.2 L2 3.5 L4 1 M0.7 7.2 L2 8.5 L4 6 M6 2.5 H11.5 M6 7.5 H11.5" stroke="#444746" stroke-width="1.1" fill="none"/></svg>
<svg class="a" style="left:893.5px;top:240px;" width="12" height="10" viewBox="0 0 12 10"><circle cx="1.3" cy="1.8" r="1" fill="#444746"/><circle cx="1.3" cy="5" r="1" fill="#444746"/><circle cx="1.3" cy="8.2" r="1" fill="#444746"/><path d="M4 1.8 H11 M4 5 H11 M4 8.2 H11" stroke="#444746" stroke-width="1.1"/></svg>
<div class="a" style="left:917px;top:235px;width:18px;height:20px;background:#d3e3fd;border-radius:3px"></div>
<svg class="a" style="left:919.5px;top:240px;" width="12" height="10" viewBox="0 0 12 10"><path d="M0.8 0.8 H1.8 V3.2 M0.8 3.2 H2.6 M0.6 5.5 H2.4 L0.6 8.2 H2.6" stroke="#0b57d0" stroke-width="0.8" fill="none"/><path d="M4.5 1.8 H11.5 M4.5 5 H11.5 M4.5 8.2 H11.5" stroke="#0b57d0" stroke-width="1.2"/></svg>
<svg class="a" style="left:951px;top:240.5px;" width="3" height="9" viewBox="0 0 3 9"><circle cx="1.5" cy="1.2" r="1" fill="#444746"/><circle cx="1.5" cy="4.5" r="1" fill="#444746"/><circle cx="1.5" cy="7.8" r="1" fill="#444746"/></svg>
<div class="a" style="left:1027px;top:236px;width:38px;height:18px;background:#e6ebf3;border-radius:9px"></div>
<svg class="a" style="left:1052px;top:244px;" width="6" height="4" viewBox="0 0 6 4"><path d="M0 0 H5.5 L2.75 3Z" fill="#444746"/></svg>
<svg class="a" style="left:1035.5px;top:240.5px;" width="10" height="10" viewBox="0 0 10 10"><path d="M1 9 L1.8 6.3 L7 1 L9 3 L3.8 8.2Z" stroke="#444746" stroke-width="1.1" fill="none"/></svg>
<svg class="a" style="left:1080.5px;top:242px;" width="9" height="6" viewBox="0 0 9 6"><path d="M1 5 L4.5 1.5 L8 5" stroke="#444746" stroke-width="1.1" fill="none"/></svg>
<div class="a" style="left:253px;top:256px;width:859px;height:405px;background:#f9fbfd"></div>
<div class="a" style="left:253px;top:273px;width:9px;height:388px;background:#fff"></div>
<div class="a" style="left:262px;top:273px;width:1px;height:388px;background:#9aa0a6"></div>
<svg class="a" style="left:253px;top:273px;" width="9" height="388" viewBox="0 0 9 388"><rect x="7" y="8.73" width="2" height="0.8" fill="#9aa0a6"/><rect x="6" y="14.65" width="3" height="0.8" fill="#9aa0a6"/><rect x="7" y="20.57" width="2" height="0.8" fill="#9aa0a6"/><rect x="7" y="32.43" width="2" height="0.8" fill="#9aa0a6"/><rect x="6" y="38.35" width="3" height="0.8" fill="#9aa0a6"/><rect x="7" y="44.28" width="2" height="0.8" fill="#9aa0a6"/><rect x="7" y="56.12" width="2" height="0.8" fill="#9aa0a6"/><rect x="6" y="62.05" width="3" height="0.8" fill="#9aa0a6"/><rect x="7" y="67.98" width="2" height="0.8" fill="#9aa0a6"/><rect x="7" y="79.82" width="2" height="0.8" fill="#9aa0a6"/><rect x="6" y="85.75" width="3" height="0.8" fill="#9aa0a6"/><rect x="7" y="91.68" width="2" height="0.8" fill="#9aa0a6"/><rect x="7" y="103.52" width="2" height="0.8" fill="#9aa0a6"/><rect x="6" y="109.45" width="3" height="0.8" fill="#9aa0a6"/><rect x="7" y="115.38" width="2" height="0.8" fill="#9aa0a6"/><rect x="7" y="127.23" width="2" height="0.8" fill="#9aa0a6"/><rect x="6" y="133.15" width="3" height="0.8" fill="#9aa0a6"/><rect x="7" y="139.08" width="2" height="0.8" fill="#9aa0a6"/><rect x="7" y="150.93" width="2" height="0.8" fill="#9aa0a6"/><rect x="6" y="156.85" width="3" height="0.8" fill="#9aa0a6"/><rect x="7" y="162.77" width="2" height="0.8" fill="#9aa0a6"/><rect x="7" y="174.62" width="2" height="0.8" fill="#9aa0a6"/><rect x="6" y="180.55" width="3" height="0.8" fill="#9aa0a6"/><rect x="7" y="186.48" width="2" height="0.8" fill="#9aa0a6"/><rect x="7" y="198.33" width="2" height="0.8" fill="#9aa0a6"/><rect x="6" y="204.25" width="3" height="0.8" fill="#9aa0a6"/><rect x="7" y="210.18" width="2" height="0.8" fill="#9aa0a6"/><rect x="7" y="222.02" width="2" height="0.8" fill="#9aa0a6"/><rect x="6" y="227.95" width="3" height="0.8" fill="#9aa0a6"/><rect x="7" y="233.88" width="2" height="0.8" fill="#9aa0a6"/><rect x="7" y="245.73" width="2" height="0.8" fill="#9aa0a6"/><rect x="6" y="251.65" width="3" height="0.8" fill="#9aa0a6"/><rect x="7" y="257.58" width="2" height="0.8" fill="#9aa0a6"/><rect x="7" y="269.42" width="2" height="0.8" fill="#9aa0a6"/><rect x="6" y="275.35" width="3" height="0.8" fill="#9aa0a6"/><rect x="7" y="281.27" width="2" height="0.8" fill="#9aa0a6"/><rect x="7" y="293.12" width="2" height="0.8" fill="#9aa0a6"/><rect x="6" y="299.05" width="3" height="0.8" fill="#9aa0a6"/><rect x="7" y="304.98" width="2" height="0.8" fill="#9aa0a6"/><rect x="7" y="316.83" width="2" height="0.8" fill="#9aa0a6"/><rect x="6" y="322.75" width="3" height="0.8" fill="#9aa0a6"/><rect x="7" y="328.67" width="2" height="0.8" fill="#9aa0a6"/><rect x="7" y="340.52" width="2" height="0.8" fill="#9aa0a6"/><rect x="6" y="346.45" width="3" height="0.8" fill="#9aa0a6"/><rect x="7" y="352.38" width="2" height="0.8" fill="#9aa0a6"/><rect x="7" y="364.23" width="2" height="0.8" fill="#9aa0a6"/><rect x="6" y="370.15" width="3" height="0.8" fill="#9aa0a6"/><rect x="7" y="376.08" width="2" height="0.8" fill="#9aa0a6"/><rect x="7" y="387.92" width="2" height="0.8" fill="#9aa0a6"/></svg>
<div class="t" style="left:250.0px;top:271.80px;width:14px;height:8px;font-size:7.5px;line-height:8px;color:#3c4043;text-align:center;transform:rotate(-90deg);transform-origin:7px 4px">9</div>
<div class="t" style="left:250.0px;top:295.49px;width:14px;height:8px;font-size:7.5px;line-height:8px;color:#3c4043;text-align:center;transform:rotate(-90deg);transform-origin:7px 4px">10</div>
<div class="t" style="left:250.0px;top:319.18px;width:14px;height:8px;font-size:7.5px;line-height:8px;color:#3c4043;text-align:center;transform:rotate(-90deg);transform-origin:7px 4px">11</div>
<div class="t" style="left:250.0px;top:342.87px;width:14px;height:8px;font-size:7.5px;line-height:8px;color:#3c4043;text-align:center;transform:rotate(-90deg);transform-origin:7px 4px">12</div>
<div class="t" style="left:250.0px;top:366.56px;width:14px;height:8px;font-size:7.5px;line-height:8px;color:#3c4043;text-align:center;transform:rotate(-90deg);transform-origin:7px 4px">13</div>
<div class="t" style="left:250.0px;top:390.25px;width:14px;height:8px;font-size:7.5px;line-height:8px;color:#3c4043;text-align:center;transform:rotate(-90deg);transform-origin:7px 4px">14</div>
<div class="t" style="left:250.0px;top:413.94px;width:14px;height:8px;font-size:7.5px;line-height:8px;color:#3c4043;text-align:center;transform:rotate(-90deg);transform-origin:7px 4px">15</div>
<div class="t" style="left:250.0px;top:437.63px;width:14px;height:8px;font-size:7.5px;line-height:8px;color:#3c4043;text-align:center;transform:rotate(-90deg);transform-origin:7px 4px">16</div>
<div class="t" style="left:250.0px;top:461.32px;width:14px;height:8px;font-size:7.5px;line-height:8px;color:#3c4043;text-align:center;transform:rotate(-90deg);transform-origin:7px 4px">17</div>
<div class="t" style="left:250.0px;top:485.01px;width:14px;height:8px;font-size:7.5px;line-height:8px;color:#3c4043;text-align:center;transform:rotate(-90deg);transform-origin:7px 4px">18</div>
<div class="t" style="left:250.0px;top:508.70px;width:14px;height:8px;font-size:7.5px;line-height:8px;color:#3c4043;text-align:center;transform:rotate(-90deg);transform-origin:7px 4px">19</div>
<div class="t" style="left:250.0px;top:532.39px;width:14px;height:8px;font-size:7.5px;line-height:8px;color:#3c4043;text-align:center;transform:rotate(-90deg);transform-origin:7px 4px">20</div>
<div class="t" style="left:250.0px;top:556.08px;width:14px;height:8px;font-size:7.5px;line-height:8px;color:#3c4043;text-align:center;transform:rotate(-90deg);transform-origin:7px 4px">21</div>
<div class="t" style="left:250.0px;top:579.77px;width:14px;height:8px;font-size:7.5px;line-height:8px;color:#3c4043;text-align:center;transform:rotate(-90deg);transform-origin:7px 4px">22</div>
<div class="t" style="left:250.0px;top:603.46px;width:14px;height:8px;font-size:7.5px;line-height:8px;color:#3c4043;text-align:center;transform:rotate(-90deg);transform-origin:7px 4px">23</div>
<div class="t" style="left:250.0px;top:627.15px;width:14px;height:8px;font-size:7.5px;line-height:8px;color:#3c4043;text-align:center;transform:rotate(-90deg);transform-origin:7px 4px">24</div>
<div class="t" style="left:250.0px;top:650.84px;width:14px;height:8px;font-size:7.5px;line-height:8px;color:#3c4043;text-align:center;transform:rotate(-90deg);transform-origin:7px 4px">25</div>
<div class="a" style="left:421px;top:273px;width:499px;height:388px;background:#fff;box-shadow:0 0 0 0.6px #e3e6ea"></div>
<svg class="a" style="left:275px;top:284px;" width="21" height="21" viewBox="0 0 21 21"><circle cx="10.5" cy="10.5" r="10.5" fill="#edf0f4"/><circle cx="6.3" cy="7.5" r="0.8" fill="#3c4043"/><circle cx="6.3" cy="10.5" r="0.8" fill="#3c4043"/><circle cx="6.3" cy="13.5" r="0.8" fill="#3c4043"/><path d="M8.3 7.5 H15 M8.3 10.5 H15 M8.3 13.5 H15" stroke="#3c4043" stroke-width="0.9"/></svg>
<div class="a" style="left:481px;top:273px;width:1px;height:388px;background:#1a1a1a"></div>
<div class="a" style="left:507.6px;top:273px;width:1.1999999999999886px;height:388px;background:#9b9b9b"></div>
<div class="a" style="left:640px;top:273px;width:1.2000000000000455px;height:388px;background:#333"></div>
<div class="a" style="left:875.6px;top:273px;width:1.1999999999999318px;height:388px;background:#8f8f8f"></div>
<div class="a" style="left:481px;top:511px;width:395.79999999999995px;height:1px;background:#222"></div>
<div class="a" style="left:481px;top:598px;width:395.79999999999995px;height:1px;background:#222"></div>
<div class="a" style="left:481px;top:611px;width:395.79999999999995px;height:1px;background:#222"></div>
<div class="a" style="left:481px;top:624.4px;width:395.79999999999995px;height:1.2000000000000455px;background:#8a8a8a"></div>
<div class="t" style="left:491.03px;top:268.27px;font-size:9.25px;line-height:9.25px;color:#1c1c1c;">2.</div>
<div class="t" style="left:491.09px;top:513.87px;font-size:9.25px;line-height:9.25px;color:#1c1c1c;">3.</div>
<div class="t" style="left:491.16px;top:600.67px;font-size:9.25px;line-height:9.25px;color:#1c1c1c;">4.</div>
<div class="t" style="left:491.08px;top:613.47px;font-size:9.25px;line-height:9.25px;color:#1c1c1c;">5.</div>
<div class="t" style="left:491.03px;top:627.77px;font-size:9.25px;line-height:9.25px;color:#1c1c1c;">6.</div>
<div class="t" style="left:512.28px;top:268.27px;font-size:9.25px;line-height:9.25px;color:#1c1c1c;">Sistem Mekanisme dan</div>
<div class="t" style="left:511.94px;top:280.52px;font-size:9.25px;line-height:9.25px;color:#1c1c1c;">Prosedur</div>
<div class="t" style="left:512.56px;top:513.87px;font-size:9.25px;line-height:9.25px;color:#1c1c1c;">Jangka Waktu Pelayanan</div>
<div class="t" style="left:511.94px;top:600.67px;font-size:9.25px;line-height:9.25px;color:#1c1c1c;">Biaya/Tarif</div>
<div class="t" style="left:511.94px;top:613.47px;font-size:9.25px;line-height:9.25px;color:#1c1c1c;">Produk Pelayanan</div>
<div class="t" style="left:511.94px;top:627.77px;font-size:9.25px;line-height:9.25px;color:#1c1c1c;">Penanganan Pengaduan,</div>
<div class="t" style="left:512.28px;top:639.87px;font-size:9.25px;line-height:9.25px;color:#1c1c1c;">Saran dan Masukan</div>
<div class="t" style="left:645.30px;top:268.27px;font-size:9.25px;line-height:9.25px;color:#1c1c1c;font-weight:bold;">Tahapan Permohonan:</div>
<div class="t" style="left:659.41px;top:280.52px;font-size:9.25px;line-height:9.25px;color:#1c1c1c;">a.</div>
<div class="t" style="left:674.24px;top:280.52px;font-size:9.25px;line-height:9.25px;color:#1c1c1c;word-spacing:6.290px;">Pemohon memberikan kelengkapan berkas</div>
<div class="t" style="left:674.40px;top:292.77px;font-size:9.25px;line-height:9.25px;color:#1c1c1c;">pelantikan pada loket layanan</div>
<div class="t" style="left:659.20px;top:305.02px;font-size:9.25px;line-height:9.25px;color:#1c1c1c;">b.</div>
<div class="t" style="left:674.24px;top:305.02px;font-size:9.25px;line-height:9.25px;color:#1c1c1c;word-spacing:16.464px;">Pemohon memperoleh tanda terima</div>
<div class="t" style="left:674.40px;top:317.27px;font-size:9.25px;line-height:9.25px;color:#1c1c1c;">penyerahan berkas dari petugas loket</div>
<div class="t" style="left:659.41px;top:329.52px;font-size:9.25px;line-height:9.25px;color:#1c1c1c;">c.</div>
<div class="t" style="left:674.24px;top:329.52px;font-size:9.25px;line-height:9.25px;color:#1c1c1c;word-spacing:11.865px;">Pemohon menerima surat pemanggilan</div>
<div class="t" style="left:674.40px;top:341.77px;font-size:9.25px;line-height:9.25px;color:#1c1c1c;">pelantikan dari kantor wilayah</div>
<div class="t" style="left:659.41px;top:354.02px;font-size:9.25px;line-height:9.25px;color:#1c1c1c;">d.</div>
<div class="t" style="left:674.24px;top:354.02px;font-size:9.25px;line-height:9.25px;color:#1c1c1c;word-spacing:1.704px;">Pemohon menerima konfirmasi kembali terkait</div>
<div class="t" style="left:675.23px;top:366.27px;font-size:9.25px;line-height:9.25px;color:#1c1c1c;word-spacing:15.826px;">jadwal kesiapan pemohon mengikuti</div>
<div class="t" style="left:674.40px;top:378.52px;font-size:9.25px;line-height:9.25px;color:#1c1c1c;">pengambilan sumpah dan pelantikan</div>
<div class="t" style="left:659.41px;top:403.02px;font-size:9.25px;line-height:9.25px;color:#1c1c1c;">a.</div>
<div class="t" style="left:674.24px;top:403.02px;font-size:9.25px;line-height:9.25px;color:#1c1c1c;word-spacing:12.367px;">Pemohon datang ke Kantor Wilayah</div>
<div class="t" style="left:674.24px;top:415.27px;font-size:9.25px;line-height:9.25px;color:#1c1c1c;word-spacing:4.788px;">Kementerian Hukum sesuai dengan Jadwal</div>
<div class="t" style="left:674.24px;top:427.52px;font-size:9.25px;line-height:9.25px;color:#1c1c1c;">Pelantikan yang telah ditentukan</div>
<div class="t" style="left:659.20px;top:439.77px;font-size:9.25px;line-height:9.25px;color:#1c1c1c;">b.</div>
<div class="t" style="left:674.24px;top:439.77px;font-size:9.25px;line-height:9.25px;color:#1c1c1c;">Pemohon melakukan gladi resik</div>
<div class="t" style="left:659.41px;top:452.02px;font-size:9.25px;line-height:9.25px;color:#1c1c1c;">c.</div>
<div class="t" style="left:674.24px;top:452.02px;font-size:9.25px;line-height:9.25px;color:#1c1c1c;word-spacing:0.030px;">Pemohon melakukan pelaksanaan pengambilan</div>
<div class="t" style="left:674.74px;top:464.27px;font-size:9.25px;line-height:9.25px;color:#1c1c1c;">sumpah dan pelantikan</div>
<div class="t" style="left:659.41px;top:476.52px;font-size:9.25px;line-height:9.25px;color:#1c1c1c;">d.</div>
<div class="t" style="left:674.24px;top:476.52px;font-size:9.25px;line-height:9.25px;color:#1c1c1c;word-spacing:5.660px;">Pemohon akan mendapatkan Berita Acara</div>
<div class="t" style="left:674.58px;top:488.77px;font-size:9.25px;line-height:9.25px;color:#1c1c1c;word-spacing:0.752px;">Sumpah yang telah ditandatangani oleh kepala</div>
<div class="t" style="left:674.38px;top:501.02px;font-size:9.25px;line-height:9.25px;color:#1c1c1c;">kantor wilayah/pejabat pengambil sumpah</div>
<div class="t" style="left:645.30px;top:390.77px;font-size:9.25px;line-height:9.25px;color:#1c1c1c;font-weight:bold;">Tahapan Pelaksanaan Pengambilan Sumpah:</div>
<div class="a" style="left:824.6px;top:378.35px;width:1.0px;height:10.0px;background:#000"></div>
<div class="a" style="left:815px;top:365.6px;width:1px;height:10.0px;background:#1a73e8"></div>
<div class="a" style="left:814.2px;top:364.6px;width:2.599999999999909px;height:2.0px;background:#1a73e8;border-radius:1px"></div>
<div class="t" style="left:645.30px;top:513.87px;font-size:9.25px;line-height:9.25px;color:#1c1c1c;font-weight:bold;">Tahapan Permohonan:</div>
<div class="t" style="left:644.70px;top:526.17px;font-size:9.25px;line-height:9.25px;color:#1c1c1c;word-spacing:6.487px;">15 (lima belas) hari kerja setelah permohonan</div>
<div class="t" style="left:645.01px;top:538.47px;font-size:9.25px;line-height:9.25px;color:#1c1c1c;">dinyatakan lengkap</div>
<div class="t" style="left:645.30px;top:550.77px;font-size:9.25px;line-height:9.25px;color:#1c1c1c;font-weight:bold;">Tahapan Pelaksanaan Pengambilan Sumpah:</div>
<div class="t" style="left:644.93px;top:563.07px;font-size:9.25px;line-height:9.25px;color:#1c1c1c;">60 (enam puluh) menit</div>
<div class="t" style="left:644.78px;top:575.37px;font-size:9.25px;line-height:9.25px;color:#1c1c1c;font-weight:bold;">Penerbitan Berita Acara Pengambilan Sumpah:</div>
<div class="t" style="left:644.70px;top:587.67px;font-size:9.25px;line-height:9.25px;color:#1c1c1c;">1 (satu) hari kerja</div>
<div class="t" style="left:644.93px;top:600.67px;font-size:9.25px;line-height:9.25px;color:#1c1c1c;">Gratis</div>
<div class="t" style="left:644.64px;top:613.47px;font-size:9.25px;line-height:9.25px;color:#1c1c1c;">Berita Acara Sumpah Pelantikan Pewarganegaraan</div>
<div class="t" style="left:644.64px;top:627.77px;font-size:9.25px;line-height:9.25px;color:#1c1c1c;word-spacing:7.295px;">Menyampaikan pengaduan, saran dan masukan</div>
<div class="t" style="left:644.78px;top:639.87px;font-size:9.25px;line-height:9.25px;color:#1c1c1c;">langsung via:</div>
<div class="t" style="left:644.93px;top:652.07px;font-size:9.25px;line-height:9.25px;color:#1c1c1c;">28)</div>
<div class="t" style="left:675.49px;top:652.07px;font-size:9.25px;line-height:9.25px;color:#1c1c1c;">Telepon :</div>
<div class="a" style="left:253px;top:256px;width:859px;height:16px;background:#f9fbfd"></div>
<div class="a" style="left:421px;top:258px;width:499px;height:14px;background:#fff"></div>
<div class="a" style="left:262px;top:272px;width:842px;height:1px;background:#dde1e6"></div>
<svg class="a" style="left:421px;top:260px;" width="499" height="12" viewBox="0 0 499 12"><rect x="5.85" y="10" width="0.8" height="2" fill="#9aa0a6"/><rect x="17.75" y="10" width="0.8" height="2" fill="#9aa0a6"/><rect x="23.70" y="9" width="0.8" height="3" fill="#9aa0a6"/><rect x="29.65" y="10" width="0.8" height="2" fill="#9aa0a6"/><rect x="41.55" y="10" width="0.8" height="2" fill="#9aa0a6"/><rect x="47.50" y="9" width="0.8" height="3" fill="#9aa0a6"/><rect x="53.45" y="10" width="0.8" height="2" fill="#9aa0a6"/><rect x="65.35" y="10" width="0.8" height="2" fill="#9aa0a6"/><rect x="71.30" y="9" width="0.8" height="3" fill="#9aa0a6"/><rect x="77.25" y="10" width="0.8" height="2" fill="#9aa0a6"/><rect x="89.15" y="10" width="0.8" height="2" fill="#9aa0a6"/><rect x="95.10" y="9" width="0.8" height="3" fill="#9aa0a6"/><rect x="101.05" y="10" width="0.8" height="2" fill="#9aa0a6"/><rect x="112.95" y="10" width="0.8" height="2" fill="#9aa0a6"/><rect x="118.90" y="9" width="0.8" height="3" fill="#9aa0a6"/><rect x="124.85" y="10" width="0.8" height="2" fill="#9aa0a6"/><rect x="136.75" y="10" width="0.8" height="2" fill="#9aa0a6"/><rect x="142.70" y="9" width="0.8" height="3" fill="#9aa0a6"/><rect x="148.65" y="10" width="0.8" height="2" fill="#9aa0a6"/><rect x="160.55" y="10" width="0.8" height="2" fill="#9aa0a6"/><rect x="166.50" y="9" width="0.8" height="3" fill="#9aa0a6"/><rect x="172.45" y="10" width="0.8" height="2" fill="#9aa0a6"/><rect x="184.35" y="10" width="0.8" height="2" fill="#9aa0a6"/><rect x="190.30" y="9" width="0.8" height="3" fill="#9aa0a6"/><rect x="196.25" y="10" width="0.8" height="2" fill="#9aa0a6"/><rect x="208.15" y="10" width="0.8" height="2" fill="#9aa0a6"/><rect x="214.10" y="9" width="0.8" height="3" fill="#9aa0a6"/><rect x="220.05" y="10" width="0.8" height="2" fill="#9aa0a6"/><rect x="231.95" y="10" width="0.8" height="2" fill="#9aa0a6"/><rect x="237.90" y="9" width="0.8" height="3" fill="#9aa0a6"/><rect x="243.85" y="10" width="0.8" height="2" fill="#9aa0a6"/><rect x="255.75" y="10" width="0.8" height="2" fill="#9aa0a6"/><rect x="261.70" y="9" width="0.8" height="3" fill="#9aa0a6"/><rect x="267.65" y="10" width="0.8" height="2" fill="#9aa0a6"/><rect x="279.55" y="10" width="0.8" height="2" fill="#9aa0a6"/><rect x="285.50" y="9" width="0.8" height="3" fill="#9aa0a6"/><rect x="291.45" y="10" width="0.8" height="2" fill="#9aa0a6"/><rect x="303.35" y="10" width="0.8" height="2" fill="#9aa0a6"/><rect x="309.30" y="9" width="0.8" height="3" fill="#9aa0a6"/><rect x="315.25" y="10" width="0.8" height="2" fill="#9aa0a6"/><rect x="327.15" y="10" width="0.8" height="2" fill="#9aa0a6"/><rect x="333.10" y="9" width="0.8" height="3" fill="#9aa0a6"/><rect x="339.05" y="10" width="0.8" height="2" fill="#9aa0a6"/><rect x="350.95" y="10" width="0.8" height="2" fill="#9aa0a6"/><rect x="356.90" y="9" width="0.8" height="3" fill="#9aa0a6"/><rect x="362.85" y="10" width="0.8" height="2" fill="#9aa0a6"/><rect x="374.75" y="10" width="0.8" height="2" fill="#9aa0a6"/><rect x="380.70" y="9" width="0.8" height="3" fill="#9aa0a6"/><rect x="386.65" y="10" width="0.8" height="2" fill="#9aa0a6"/><rect x="398.55" y="10" width="0.8" height="2" fill="#9aa0a6"/><rect x="404.50" y="9" width="0.8" height="3" fill="#9aa0a6"/><rect x="410.45" y="10" width="0.8" height="2" fill="#9aa0a6"/><rect x="422.35" y="10" width="0.8" height="2" fill="#9aa0a6"/><rect x="428.30" y="9" width="0.8" height="3" fill="#9aa0a6"/><rect x="434.25" y="10" width="0.8" height="2" fill="#9aa0a6"/><rect x="446.15" y="10" width="0.8" height="2" fill="#9aa0a6"/><rect x="452.10" y="9" width="0.8" height="3" fill="#9aa0a6"/><rect x="458.05" y="10" width="0.8" height="2" fill="#9aa0a6"/><rect x="469.95" y="10" width="0.8" height="2" fill="#9aa0a6"/><rect x="475.90" y="9" width="0.8" height="3" fill="#9aa0a6"/><rect x="481.85" y="10" width="0.8" height="2" fill="#9aa0a6"/><rect x="493.75" y="10" width="0.8" height="2" fill="#9aa0a6"/></svg>
<div class="t" style="left:430.25px;top:263.47px;font-size:7px;line-height:7px;color:#4a4e52;text-align:center">2</div>
<div class="t" style="left:453.87px;top:263.47px;font-size:7px;line-height:7px;color:#4a4e52;text-align:center">1</div>
<div class="t" style="left:525.45px;top:263.47px;font-size:7px;line-height:7px;color:#4a4e52;text-align:center">2</div>
<div class="t" style="left:549.33px;top:263.47px;font-size:7px;line-height:7px;color:#4a4e52;text-align:center">3</div>
<div class="t" style="left:573.24px;top:263.47px;font-size:7px;line-height:7px;color:#4a4e52;text-align:center">4</div>
<div class="t" style="left:596.92px;top:263.47px;font-size:7px;line-height:7px;color:#4a4e52;text-align:center">5</div>
<div class="t" style="left:620.64px;top:263.47px;font-size:7px;line-height:7px;color:#4a4e52;text-align:center">6</div>
<div class="t" style="left:644.44px;top:263.47px;font-size:7px;line-height:7px;color:#4a4e52;text-align:center">7</div>
<div class="t" style="left:668.30px;top:263.47px;font-size:7px;line-height:7px;color:#4a4e52;text-align:center">8</div>
<div class="t" style="left:692.07px;top:263.47px;font-size:7px;line-height:7px;color:#4a4e52;text-align:center">9</div>
<div class="t" style="left:713.47px;top:263.47px;font-size:7px;line-height:7px;color:#4a4e52;text-align:center">10</div>
<div class="t" style="left:737.27px;top:263.47px;font-size:7px;line-height:7px;color:#4a4e52;text-align:center">11</div>
<div class="t" style="left:761.07px;top:263.47px;font-size:7px;line-height:7px;color:#4a4e52;text-align:center">12</div>
<div class="t" style="left:784.87px;top:263.47px;font-size:7px;line-height:7px;color:#4a4e52;text-align:center">13</div>
<div class="t" style="left:808.67px;top:263.47px;font-size:7px;line-height:7px;color:#4a4e52;text-align:center">14</div>
<div class="t" style="left:832.47px;top:263.47px;font-size:7px;line-height:7px;color:#4a4e52;text-align:center">15</div>
<div class="t" style="left:856.27px;top:263.47px;font-size:7px;line-height:7px;color:#4a4e52;text-align:center">16</div>
<div class="t" style="left:880.07px;top:263.47px;font-size:7px;line-height:7px;color:#4a4e52;text-align:center">17</div>
<div class="t" style="left:903.87px;top:263.47px;font-size:7px;line-height:7px;color:#4a4e52;text-align:center">18</div>
<svg class="a" style="left:507.5px;top:262px;" width="2" height="10" viewBox="0 0 2 10"><path d="M0.8 0 V10" stroke="#70757a" stroke-width="0.9" stroke-dasharray="1.5 1.5"/></svg>
<svg class="a" style="left:639.8px;top:262px;" width="2" height="10" viewBox="0 0 2 10"><path d="M0.8 0 V10" stroke="#70757a" stroke-width="0.9" stroke-dasharray="1.5 1.5"/></svg>
<div class="a" style="left:655.4px;top:264.3px;width:7.399999999999977px;height:1.8999999999999773px;background:#5a8fd0"></div>
<svg class="a" style="left:671px;top:266.5px;" width="7" height="4" viewBox="0 0 7 4"><path d="M0 0 H7 L3.5 3.8Z" fill="#5a8fd0"/></svg>
<svg class="a" style="left:867.5px;top:266.5px;" width="7" height="4" viewBox="0 0 7 4"><path d="M0 0 H7 L3.5 3.8Z" fill="#5a8fd0"/></svg>
<div class="a" style="left:866.5px;top:272.5px;width:8.5px;height:2.5px;background:#e8eaed;border:0.5px solid #c4c7c5"></div>
<div class="a" style="left:907px;top:493px;width:30px;height:54px;background:#fff;border-radius:15px;box-shadow:0 1px 3px rgba(60,64,67,.3),0 1px 2px rgba(60,64,67,.15)"></div>
<svg class="a" style="left:915.5px;top:501px;" width="13" height="12" viewBox="0 0 13 12"><path d="M0.8 1.6 Q0.8 0.8 1.6 0.8 H11.4 Q12.2 0.8 12.2 1.6 V11.3 L10 9.3 H1.6 Q0.8 9.3 0.8 8.5Z" stroke="#2f6fb8" stroke-width="1.1" fill="none"/><path d="M6.5 2.6 V7.4 M4.1 5 H8.9" stroke="#2f6fb8" stroke-width="1.1"/></svg>
<svg class="a" style="left:915.5px;top:527px;" width="13" height="12" viewBox="0 0 13 12"><path d="M0.8 1.6 Q0.8 0.8 1.6 0.8 H11.4 Q12.2 0.8 12.2 1.6 V11.3 L10 9.3 H1.6 Q0.8 9.3 0.8 8.5Z" stroke="#2f6fb8" stroke-width="1.1" fill="none"/><path d="M3.2 7.3 L4 5.5 L7.5 2.5 L8.8 3.8 L5.3 6.8Z M6 7.3 H9.5" stroke="#2f6fb8" stroke-width="0.9" fill="none"/></svg>
<div class="a" style="left:1104.5px;top:438px;width:4.5px;height:14px;background:#c4c7cc;border-radius:2px"></div>
<svg class="a" style="left:1093px;top:628px;clip-path:inset(0 3px 0 0)" width="22" height="30" viewBox="0 0 22 30"><path d="M19 1 A14 14 0 0 0 19 29 V1Z" fill="#fff" stroke="#e6e6e6" stroke-width="0.8"/><path d="M14 10.5 L10.5 14.5 L14 18.5" stroke="#333" stroke-width="1.3" fill="none"/></svg>
<svg class="a" style="left:881px;top:575px;" width="8" height="13" viewBox="0 0 8 13"><path d="M1 0.8 H3 Q4 0.8 4 2 V11 Q4 12.2 3 12.2 H1 M7 0.8 H5 Q4 0.8 4 2 V11 Q4 12.2 5 12.2 H7" stroke="#000" stroke-width="1" fill="none"/></svg>
<div class="a" style="left:0px;top:661px;width:1366px;height:58px;background:#000"></div>
<div class="a" style="left:967px;top:668px;width:96px;height:49px;background:#1f1f21;border-radius:8px"></div>
<svg class="a" style="left:38px;top:670px;" width="27" height="27" viewBox="0 0 27 27"><rect x="9" y="1.5" width="8" height="14" rx="4" stroke="#fff" stroke-width="1.8" fill="none"/><path d="M4.5 11.5 Q4.5 20 13 20 Q21.5 20 21.5 11.5" stroke="#fff" stroke-width="1.8" fill="none"/><path d="M13 20 V24.5 M8 25 H18" stroke="#fff" stroke-width="1.8"/><path d="M2 25.5 L25 2.5" stroke="#e0245e" stroke-width="2.4"/></svg>
<div class="t" style="left:36.38px;top:699.17px;font-size:13.5px;line-height:13.5px;color:#fff;transform:scaleX(0.9430);-webkit-text-stroke:0.5px currentColor">Audio</div>
<svg class="a" style="left:80px;top:680px;" width="9" height="6" viewBox="0 0 9 6"><path d="M1 5 L4.5 1.5 L8 5" stroke="#fff" stroke-width="1.6" fill="none" stroke-linecap="round" stroke-linejoin="round"/></svg>
<svg class="a" style="left:131px;top:671px;" width="28" height="24" viewBox="0 0 28 24"><rect x="1.5" y="5" width="17" height="14" rx="2.5" stroke="#fff" stroke-width="1.8" fill="none"/><path d="M18.5 10 L26 5.5 V18.5 L18.5 14" stroke="#fff" stroke-width="1.8" fill="none" stroke-linejoin="round"/><path d="M2 23 L24 1" stroke="#e0245e" stroke-width="2.4"/></svg>
<div class="t" style="left:128.95px;top:699.17px;font-size:13.5px;line-height:13.5px;color:#fff;transform:scaleX(0.9144);-webkit-text-stroke:0.5px currentColor">Video</div>
<svg class="a" style="left:177px;top:680px;" width="9" height="6" viewBox="0 0 9 6"><path d="M1 5 L4.5 1.5 L8 5" stroke="#fff" stroke-width="1.6" fill="none" stroke-linecap="round" stroke-linejoin="round"/></svg>
<svg class="a" style="left:283px;top:674px;" width="20" height="20" viewBox="0 0 20 20"><circle cx="7" cy="5.5" r="4" stroke="#fff" stroke-width="1.7" fill="none"/><path d="M1 18.5 V16 Q1 11.5 7 11.5 Q13 11.5 13 16 V18.5Z" stroke="#fff" stroke-width="1.7" fill="none" stroke-linejoin="round"/><circle cx="14.5" cy="8.5" r="3" stroke="#fff" stroke-width="1.6" fill="none"/><path d="M14 18.5 H19 V16.5 Q19 13.3 15.5 13.3" stroke="#fff" stroke-width="1.6" fill="none"/></svg>
<div class="t" style="left:308.56px;top:675.74px;font-size:12px;line-height:12px;color:#a8a8a8;font-weight:bold;transform:scaleX(1.0641);">27</div>
<div class="t" style="left:261.00px;top:699.17px;font-size:13.5px;line-height:13.5px;color:#fff;transform:scaleX(0.9023);-webkit-text-stroke:0.5px currentColor">Participants</div>
<svg class="a" style="left:390px;top:671px;" width="25" height="24" viewBox="0 0 25 24"><path d="M6 3.5 Q6 1 8.5 1 H21.5 Q24 1 24 3.5 V12 Q24 14.5 21.5 14.5 H20" stroke="#fff" stroke-width="1.7" fill="none"/><path d="M3.5 6 H16.5 Q19 6 19 8.5 V15.5 Q19 18 16.5 18 H9 L4.5 22.5 V18 H3.5 Q1 18 1 15.5 V8.5 Q1 6 3.5 6Z" stroke="#fff" stroke-width="1.7" fill="#000" stroke-linejoin="round"/><circle cx="6" cy="12" r="1.1" fill="#fff"/><circle cx="10" cy="12" r="1.1" fill="#fff"/><circle cx="14" cy="12" r="1.1" fill="#fff"/></svg>
<div class="t" style="left:390.00px;top:699.17px;font-size:13.5px;line-height:13.5px;color:#fff;transform:scaleX(0.8726);-webkit-text-stroke:0.5px currentColor">Chat</div>
<svg class="a" style="left:431.5px;top:680px;" width="9" height="6" viewBox="0 0 9 6"><path d="M1 5 L4.5 1.5 L8 5" stroke="#fff" stroke-width="1.6" fill="none" stroke-linecap="round" stroke-linejoin="round"/></svg>
<svg class="a" style="left:474px;top:671px;" width="28" height="23" viewBox="0 0 28 23"><path d="M14 21 L3.5 11.5 Q0.5 8.5 2 5 Q3.5 1.5 7.5 1.5 Q11.5 1.5 14 5 Q16.5 1.5 20.5 1.5 Q24.5 1.5 26 5 Q27.5 8.5 24.5 11.5Z" stroke="#fff" stroke-width="1.7" fill="none" stroke-linejoin="round"/></svg>
<div class="t" style="left:472.05px;top:699.17px;font-size:13.5px;line-height:13.5px;color:#fff;transform:scaleX(0.8603);-webkit-text-stroke:0.5px currentColor">React</div>
<svg class="a" style="left:564px;top:672px;" width="25" height="21" viewBox="0 0 25 21"><rect x="0.5" y="0.5" width="24" height="20" rx="3" fill="#1fd57a"/><path d="M12.5 16 V6 M8 10 L12.5 5.5 L17 10" stroke="#000" stroke-width="2.2" fill="none" stroke-linecap="round" stroke-linejoin="round"/></svg>
<div class="t" style="left:561.37px;top:699.17px;font-size:13.5px;line-height:13.5px;color:#fff;transform:scaleX(0.8704);-webkit-text-stroke:0.5px currentColor">Share</div>
<svg class="a" style="left:654px;top:671px;" width="24" height="23" viewBox="0 0 24 23"><circle cx="18" cy="5" r="3.8" stroke="#fff" stroke-width="1.7" fill="none"/><circle cx="5" cy="18" r="3.8" stroke="#fff" stroke-width="1.7" fill="none"/><path d="M1.2 9 V5 Q1.2 1.2 5 1.2 H9" stroke="#fff" stroke-width="1.7" fill="none"/><path d="M22.8 14 V18 Q22.8 21.8 19 21.8 H15" stroke="#fff" stroke-width="1.7" fill="none"/></svg>
<div class="t" style="left:651.98px;top:699.17px;font-size:13.5px;line-height:13.5px;color:#fff;transform:scaleX(0.9155);-webkit-text-stroke:0.5px currentColor">Apps</div>
<svg class="a" style="left:733px;top:671px;" width="25" height="24" viewBox="0 0 25 24"><circle cx="12.5" cy="12" r="10.8" stroke="#fff" stroke-width="1.8" fill="none"/><circle cx="12.5" cy="12" r="5" fill="#fff"/></svg>
<div class="t" style="left:725.91px;top:699.17px;font-size:13.5px;line-height:13.5px;color:#fff;transform:scaleX(0.8907);-webkit-text-stroke:0.5px currentColor">Record</div>
<svg class="a" style="left:823px;top:671px;" width="26" height="24" viewBox="0 0 26 24"><rect x="0.5" y="0.5" width="11.5" height="10.8" rx="1" fill="#fff"/><rect x="13.5" y="0.5" width="11.5" height="10.8" rx="1" fill="#fff"/><rect x="0.5" y="12.7" width="11.5" height="10.8" rx="1" fill="#fff"/><rect x="13.5" y="12.7" width="11.5" height="10.8" rx="1" fill="#fff"/></svg>
<div class="t" style="left:793.20px;top:699.17px;font-size:13.5px;line-height:13.5px;color:#fff;transform:scaleX(0.8987);-webkit-text-stroke:0.5px currentColor">Breakout rooms</div>
<svg class="a" style="left:915px;top:671px;" width="22" height="24" viewBox="0 0 22 24"><rect x="1" y="1" width="19.5" height="22" rx="3" stroke="#fff" stroke-width="1.8" fill="none"/><path d="M5.5 7 H13 M5.5 12 H15.5 M5.5 17 H11" stroke="#fff" stroke-width="1.7" stroke-linecap="round"/></svg>
<div class="t" style="left:910.96px;top:699.17px;font-size:13.5px;line-height:13.5px;color:#fff;transform:scaleX(0.9396);-webkit-text-stroke:0.5px currentColor">Docs</div>
<svg class="a" style="left:1001px;top:671px;" width="26" height="25" viewBox="0 0 26 25"><circle cx="13" cy="12.5" r="11.3" stroke="#fff" stroke-width="1.8" fill="none"/><circle cx="13" cy="7" r="1.5" fill="#fff"/><path d="M10.5 10.5 H13.5 V18.5 M10.5 18.5 H16" stroke="#fff" stroke-width="1.9" fill="none"/></svg>
<div class="t" style="left:980.36px;top:699.17px;font-size:13.5px;line-height:13.5px;color:#d0d0d0;transform:scaleX(0.9406);-webkit-text-stroke:0.5px currentColor">Meeting info</div>
<svg class="a" style="left:1098px;top:674px;" width="26" height="19" viewBox="0 0 26 19"><rect x="1" y="1" width="23.5" height="17" rx="3.5" stroke="#fff" stroke-width="1.8" fill="none"/><text x="4.6" y="13.6" font-family="Liberation Sans" font-weight="bold" font-size="9.5" fill="#fff">CC</text></svg>
<div class="t" style="left:1071.65px;top:699.17px;font-size:13.5px;line-height:13.5px;color:#fff;transform:scaleX(0.9031);-webkit-text-stroke:0.5px currentColor">Show captions</div>
<svg class="a" style="left:1142px;top:680px;" width="9" height="6" viewBox="0 0 9 6"><path d="M1 5 L4.5 1.5 L8 5" stroke="#fff" stroke-width="1.6" fill="none" stroke-linecap="round" stroke-linejoin="round"/></svg>
<svg class="a" style="left:1187px;top:671px;" width="26" height="25" viewBox="0 0 26 25"><circle cx="13" cy="12.5" r="11.3" stroke="#fff" stroke-width="1.8" fill="none"/><circle cx="8" cy="12.5" r="1.5" fill="#fff"/><circle cx="13" cy="12.5" r="1.5" fill="#fff"/><circle cx="18" cy="12.5" r="1.5" fill="#fff"/></svg>
<div class="t" style="left:1185.74px;top:699.17px;font-size:13.5px;line-height:13.5px;color:#fff;transform:scaleX(0.9535);-webkit-text-stroke:0.5px currentColor">More</div>
<svg class="a" style="left:1305px;top:670px;" width="26" height="26" viewBox="0 0 26 26"><path d="M15 3 L24.5 1 V23 L15 25 Z" stroke="#e0245e" stroke-width="1.7" fill="none" stroke-linejoin="round"/><path d="M15 3 V25" stroke="#e0245e" stroke-width="1.7"/><circle cx="9" cy="4.5" r="2.2" stroke="#fff" stroke-width="1.5" fill="#000"/><path d="M8 8.5 L5 15 L8 17 L6.5 23.5 M8 8.5 L11.5 12 L14 12 M8 13 L11.5 17.5 L12.5 23.5 M6 11 L3 13.5 L2 16" stroke="#fff" stroke-width="1.5" fill="none" stroke-linecap="round" stroke-linejoin="round"/></svg>
<div class="t" style="left:1286.52px;top:699.17px;font-size:13.5px;line-height:13.5px;color:#fff;transform:scaleX(0.8875);-webkit-text-stroke:0.5px currentColor">Leave room</div>
<svg class="a" style="left:18px;top:608px;" width="30" height="30" viewBox="0 0 30 30"><circle cx="15" cy="15" r="15" fill="#25282c"/><path d="M9.5 20 L10 16.5 L18 8.5 L21 11.5 L13 19.5Z" stroke="#2ee28c" stroke-width="1.4" fill="none" stroke-linejoin="round"/><path d="M8.5 22.3 H21" stroke="#2ee28c" stroke-width="1.4"/></svg>
<div class="a" style="left:0px;top:719px;width:1366px;height:49px;background:linear-gradient(90deg,#dfe9f6 0%,#e2ebf7 40%,#e3ebf6 70%,#e6edf7 100%)"></div>
<div class="a" style="left:0px;top:719px;width:1366px;height:1px;background:#f4f6f9"></div>
<div class="a" style="left:0px;top:720px;width:1366px;height:1px;background:#bfc8d2"></div>
<svg class="a" style="left:17px;top:726px;" width="30" height="30" viewBox="0 0 30 30"><defs><linearGradient id="cl" x1="0" y1="0" x2="0" y2="1"><stop offset="0" stop-color="#bcd7f5"/><stop offset="1" stop-color="#6c9fd9"/></linearGradient></defs><path d="M4 28 Q0 28 0.5 24.5 Q1 21 5 21 Q6 16 11.5 16 Q16.5 16 18 20 Q22 19.5 24.5 22.5 Q26.5 28 22 28Z" fill="url(#cl)"/><circle cx="21" cy="8.3" r="7.3" fill="#c42b1c"/><text x="17.6" y="12.3" font-family="Liberation Sans" font-size="11" fill="#fff">4</text></svg>
<div class="t" style="left:50.01px;top:730.14px;font-size:12px;line-height:12px;color:#1b1b1b;transform:scaleX(0.9357);">89°F</div>
<div class="t" style="left:49.47px;top:745.24px;font-size:12px;line-height:12px;color:#5d5d5d;transform:scaleX(1.0435);">Mostly cloudy</div>
<svg class="a" style="left:384px;top:733px;" width="24" height="23" viewBox="0 0 24 23"><defs><linearGradient id="wl" x1="0" y1="0" x2="1" y2="1"><stop offset="0" stop-color="#3fc0f5"/><stop offset="1" stop-color="#0a6fd6"/></linearGradient></defs><rect x="0" y="0" width="11.3" height="11" fill="url(#wl)"/><rect x="12.3" y="0" width="11.3" height="11" fill="url(#wl)"/><rect x="0" y="12" width="11.3" height="11" fill="url(#wl)"/><rect x="12.3" y="12" width="11.3" height="11" fill="url(#wl)"/></svg>
<div class="a" style="left:422px;top:729.5px;width:217px;height:29.5px;background:#fbfcfe;border-radius:15px;border:1px solid #dfe5ee"></div>
<svg class="a" style="left:430px;top:736px;" width="17" height="17" viewBox="0 0 17 17"><circle cx="7" cy="7" r="5.5" stroke="#1b1b1b" stroke-width="1.5" fill="none"/><path d="M11 11 L15.5 15.5" stroke="#1b1b1b" stroke-width="1.6" stroke-linecap="round"/></svg>
<div class="t" style="left:456.59px;top:738.42px;font-size:12.5px;line-height:12.5px;color:#555;transform:scaleX(1.0673);">Search</div>
<svg class="a" style="left:586px;top:731px;" width="52" height="26" viewBox="0 0 52 26"><path d="M2 24 L14 6 L24 24Z" fill="#f3c443"/><path d="M10 25 L24 4 L38 25Z" fill="#5bbf7a"/><path d="M26 25 L38 8 L50 25Z" fill="#c04fc0"/><path d="M18 25 L28 12 L38 25Z" fill="#2e9e72"/><path d="M0 25 L8 14 L16 25Z" fill="#9bd3a6"/></svg>
<svg class="a" style="left:651px;top:733px;" width="26" height="23" viewBox="0 0 26 23"><rect x="8" y="0.5" width="16" height="15" rx="1.5" fill="#f5f5f5" stroke="#c8c8c8" stroke-width="0.8"/><rect x="1" y="7.5" width="14" height="14" rx="1" fill="#1f1f1f"/><rect x="4" y="4" width="13" height="12" fill="#bdbdbd" opacity="0.9"/></svg>
<svg class="a" style="left:695px;top:733px;" width="27" height="23" viewBox="0 0 27 23"><path d="M0.5 3 Q0.5 1 2.5 1 H10 L12.5 3.5 H24.5 Q26.5 3.5 26.5 5.5 V8 H0.5Z" fill="#e6a317"/><rect x="0.5" y="7" width="26" height="15.5" rx="1.5" fill="#f8c537"/><rect x="0.5" y="13" width="26" height="9.5" rx="1" fill="#1877c9"/></svg>
<div class="a" style="left:705px;top:759.5px;width:6px;height:1.5px;background:#7a7f87;border-radius:1px"></div>
<svg class="a" style="left:740px;top:733px;" width="25" height="24" viewBox="0 0 25 24"><defs><radialGradient id="ff" cx="0.6" cy="0.3" r="0.8"><stop offset="0" stop-color="#ffd64a"/><stop offset="0.45" stop-color="#ff7b2b"/><stop offset="1" stop-color="#e5305a"/></radialGradient></defs><circle cx="12.5" cy="12.5" r="11.5" fill="url(#ff)"/><circle cx="12.5" cy="13" r="6" fill="#7a3cd6"/><path d="M6 10 Q9 6 14 7 Q10 9 12 12 Q8 12 6 10Z" fill="#ff9a3a"/></svg>
<svg class="a" style="left:783px;top:733px;" width="26" height="24" viewBox="0 0 26 24"><defs><linearGradient id="ed" x1="0" y1="0" x2="1" y2="1"><stop offset="0" stop-color="#35c1f1"/><stop offset="0.6" stop-color="#1d8ad6"/><stop offset="1" stop-color="#49c35b"/></linearGradient></defs><circle cx="13" cy="12" r="11.5" fill="url(#ed)"/><path d="M5 14 Q8 6 15 8 Q21 10 19 15 H9 Q10 20 16 20 Q10 24 6 19 Z" fill="#e8f4fb" opacity="0.9"/><circle cx="9" cy="17" r="4" fill="#9aa3ab"/><circle cx="9" cy="15.8" r="1.6" fill="#eee"/></svg>
<div class="a" style="left:827px;top:733px;width:25px;height:24px;background:#7d7f84;border-radius:5px"></div>
<div class="a" style="left:837px;top:759.5px;width:6px;height:1.5px;background:#7a7f87;border-radius:1px"></div>
<svg class="a" style="left:870px;top:727px;" width="32" height="31" viewBox="0 0 32 31"><circle cx="13" cy="18" r="11.5" fill="#db4437"/><path d="M13 18 L3 24 Q1 20 1.5 16Z" fill="#0f9d58"/><path d="M13 18 L23 24 Q18 30 10 29Z" fill="#0f9d58"/><path d="M13 18 L24.5 17 Q25 22 23 24Z" fill="#f4b400"/><circle cx="13" cy="18" r="5.2" fill="#fff"/><circle cx="13" cy="18" r="4" fill="#4285f4"/><circle cx="24" cy="8" r="7.5" fill="#173f7a"/><circle cx="24" cy="6.5" r="3" fill="#d2a98a"/><path d="M18 13 Q24 9 30 13 V14 H18Z" fill="#fff"/></svg>
<div class="a" style="left:881px;top:759.5px;width:6px;height:1.5px;background:#7a7f87;border-radius:1px"></div>
<svg class="a" style="left:915px;top:733px;" width="26" height="24" viewBox="0 0 26 24"><rect x="6" y="1" width="19" height="22" rx="2" fill="#2b7cd3"/><rect x="6" y="8" width="19" height="7" fill="#185abd"/><rect x="6" y="15" width="19" height="8" fill="#103f91"/><rect x="0.5" y="6" width="13" height="13" rx="1.5" fill="#185abd"/><text x="1.6" y="16.2" font-family="Liberation Sans" font-weight="bold" font-size="10" fill="#fff">W</text></svg>
<div class="a" style="left:925px;top:759.5px;width:6px;height:1.5px;background:#7a7f87;border-radius:1px"></div>
<div class="a" style="left:954px;top:725px;width:37px;height:38px;background:rgba(255,255,255,0.55);border-radius:5px"></div>
<svg class="a" style="left:958.5px;top:731px;" width="28" height="28" viewBox="0 0 28 28"><circle cx="14" cy="14" r="13.5" fill="#0b5cff"/><text x="4.6" y="18" font-family="Liberation Sans" font-weight="bold" font-size="11.5" fill="#fff">zm</text></svg>
<div class="a" style="left:963px;top:759.5px;width:19px;height:2.5px;background:#0f6cbd;border-radius:1.5px"></div>
<svg class="a" style="left:1124px;top:740px;" width="12" height="7" viewBox="0 0 12 7"><path d="M1 6 L6 1 L11 6" stroke="#1b1b1b" stroke-width="1.3" fill="none"/></svg>
<svg class="a" style="left:1153px;top:737px;" width="18" height="14" viewBox="0 0 18 14"><path d="M4 12.5 Q0.8 12.5 0.8 9.5 Q0.8 6.8 3.6 6.5 Q4.5 2 9 2 Q13 2 14 5.5 Q17.2 5.8 17.2 9 Q17.2 12.5 13.8 12.5Z" fill="#bfbfbf" stroke="#333" stroke-width="1"/><path d="M2 1 L16.5 13.5" stroke="#333" stroke-width="1.3"/></svg>
<svg class="a" style="left:1187px;top:736px;" width="13" height="16" viewBox="0 0 13 16"><rect x="3.5" y="0.8" width="6" height="10" rx="3" stroke="#2b73c8" stroke-width="1.4" fill="none"/><path d="M1 7.5 Q1 13 6.5 13 Q12 13 12 7.5 M6.5 13 V15.5" stroke="#2b73c8" stroke-width="1.3" fill="none"/></svg>
<svg class="a" style="left:1217px;top:738px;" width="17" height="13" viewBox="0 0 17 13"><path d="M1 4.5 Q8.5 -1.5 16 4.5 M3.5 7.2 Q8.5 3 13.5 7.2 M6 9.8 Q8.5 7.8 11 9.8" stroke="#1b1b1b" stroke-width="1.3" fill="none"/><circle cx="8.5" cy="11.8" r="1.2" fill="#1b1b1b"/></svg>
<svg class="a" style="left:1241px;top:737px;" width="18" height="15" viewBox="0 0 18 15"><path d="M1 5 H4.5 L8.5 1.2 V13.8 L4.5 10 H1Z" stroke="#1b1b1b" stroke-width="1.2" fill="none" stroke-linejoin="round"/><path d="M11 4.5 Q12.8 7.5 11 10.5 M13.3 2.5 Q16.3 7.5 13.3 12.5" stroke="#1b1b1b" stroke-width="1.2" fill="none"/></svg>
<svg class="a" style="left:1265px;top:737px;" width="17" height="14" viewBox="0 0 17 14"><rect x="1" y="4" width="13" height="8.5" rx="1.5" stroke="#1b1b1b" stroke-width="1.2" fill="none"/><rect x="14.5" y="6.5" width="1.8" height="3.5" fill="#1b1b1b"/><rect x="2.8" y="5.8" width="9.4" height="4.9" fill="#1b1b1b"/><path d="M5 0.5 L2.5 4 H5.5 L3.5 7.5" stroke="#1b1b1b" stroke-width="1" fill="none"/></svg>
<div class="t" style="left:1060.81px;top:748.34px;font-size:12px;line-height:12px;color:rgba(255,255,255,0.5);transform:scaleX(1.0565);">© Copyright Kantor Wilayah Kementerian</div>
<div class="t" style="left:1303.19px;top:729.54px;font-size:12px;line-height:12px;color:#1b1b1b;transform:scaleX(0.9909);">1:47 PM</div>
<div class="t" style="left:1297.71px;top:745.54px;font-size:12px;line-height:12px;color:#1b1b1b;transform:scaleX(1.0672);">3/4/2026</div></body></html>
